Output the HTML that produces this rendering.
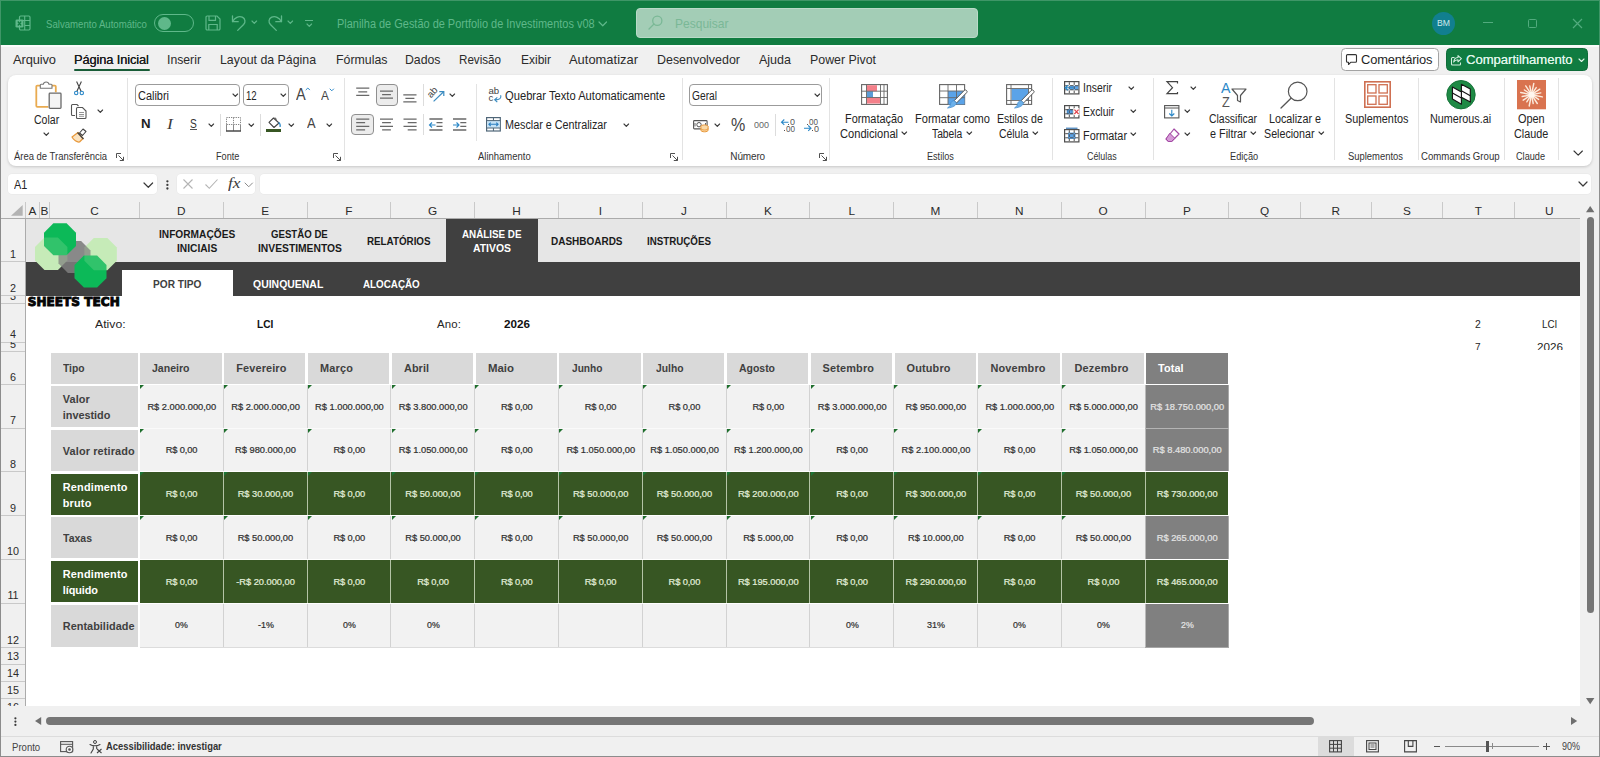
<!DOCTYPE html>
<html lang="pt-BR">
<head>
<meta charset="utf-8">
<title>Planilha de Gestão de Portfolio de Investimentos v08 - Excel</title>
<style>
*{box-sizing:border-box;margin:0;padding:0}
html,body{width:1600px;height:757px;overflow:hidden;background:#f0f0f0}
body{font-family:"Liberation Sans",Arial,sans-serif;color:#242424;position:relative}
.abs{position:absolute}
.t{position:absolute;white-space:nowrap;line-height:1}
svg{position:absolute;overflow:visible}
/* title bar */
#title{position:absolute;left:0;top:0;width:1600px;height:45px;background:#107c41;border-top:1px solid #3f9667;border-left:1px solid #3f9667;border-right:1px solid #3f9667}
/* ribbon */
#ribbon{position:absolute;left:8px;top:74.5px;width:1583.5px;height:91px;background:#fff;border-radius:8px;box-shadow:0 1px 3px rgba(0,0,0,.18)}
.tri{position:absolute;width:0;height:0;border-top:4.6px solid #1e6e2c;border-right:4.8px solid transparent}
</style>
</head>
<body>
<!-- g_title -->
<div id="title"></div>
<svg style="left:15.0px;top:15.0px" width="16" height="16" viewBox="0 0 16 16" ><rect x="4.500" y="1" width="10.500" height="14" rx="1.200" fill="none" stroke="#5fb88a" stroke-width="1.200"/><path d="M9.700 1v14M4.500 5.500h10.500M9.700 10.500h5.300" stroke="#5fb88a" stroke-width="1.100" fill="none"/><rect x="0.500" y="4.500" width="8" height="8" rx="1.300" fill="#5fb88a"/><path d="M2.800 6.500l3.400 4M6.200 6.500l-3.400 4" stroke="#107c41" stroke-width="1.200"/></svg>
<div class="t" style="left:46.0px;top:18.5px;font-size:10.6px;color:#5fb88a;transform:scaleX(0.907);transform-origin:0 0;">Salvamento Automático</div>
<div class="abs" style="left:154.0px;top:13.5px;width:40.0px;height:18.5px;border:1.2px solid #5fb88a;border-radius:10px"></div>
<div class="abs" style="left:157.5px;top:16.5px;width:13.0px;height:13.0px;border-radius:50%;background:#5fb88a"></div>
<svg style="left:205.0px;top:15.0px" width="16" height="16" viewBox="0 0 16 16" fill="none" stroke="#5fb88a" stroke-width="1.200"><path d="M1 2.200a1.200 1.200 0 0 1 1.200-1.200h9.800l3 3v9.800a1.200 1.200 0 0 1-1.200 1.200h-11.600a1.200 1.200 0 0 1-1.200-1.200z"/><path d="M4 1v4.300h6.500v-4.300M3.800 15v-5.500h8.400v5.500"/></svg>
<svg style="left:231.0px;top:15.0px" width="16" height="16" viewBox="0 0 16 16" fill="none" stroke="#5fb88a" stroke-width="1.300" stroke-linecap="round" stroke-linejoin="round"><path d="M1.500 1v5.700h5.700"/><path d="M1.700 6.500C3.600 2.700 7.800 0.700 11.300 2.200c3.200 1.500 3.400 5 1.300 7.300L6.700 15.400"/></svg>
<svg style="left:252.2px;top:21.4px" width="4.6" height="2.3" viewBox="0 0 4.6 2.3"><path d="M0 0L2.3 2.3L4.6 0" fill="none" stroke="#5fb88a" stroke-width="1.15" stroke-linecap="round" stroke-linejoin="round"/></svg>
<svg style="left:266.5px;top:15.0px" width="16" height="16" viewBox="0 0 16 16" fill="none" stroke="#5fb88a" stroke-width="1.300" stroke-linecap="round" stroke-linejoin="round"><path d="M14.500 1v5.700h-5.700"/><path d="M14.300 6.500C12.400 2.700 8.200 0.700 4.700 2.200c-3.200 1.500-3.400 5-1.300 7.300L9.300 15.400"/></svg>
<svg style="left:288.2px;top:21.4px" width="4.6" height="2.3" viewBox="0 0 4.6 2.3"><path d="M0 0L2.3 2.3L4.6 0" fill="none" stroke="#5fb88a" stroke-width="1.15" stroke-linecap="round" stroke-linejoin="round"/></svg>
<div class="abs" style="left:305.0px;top:20.2px;width:8.0px;height:1.2px;background:#5fb88a"></div>
<svg style="left:306.7px;top:23.5px" width="4.6" height="2.3" viewBox="0 0 4.6 2.3"><path d="M0 0L2.3 2.3L4.6 0" fill="none" stroke="#5fb88a" stroke-width="1.15" stroke-linecap="round" stroke-linejoin="round"/></svg>
<div class="t" style="left:336.5px;top:18.0px;font-size:12.3px;color:#5fb88a;transform:scaleX(0.891);transform-origin:0 0;">Planilha de Gestão de Portfolio de Investimentos v08</div>
<svg style="left:599.2px;top:21.6px" width="7.5" height="3.75" viewBox="0 0 7.5 3.75"><path d="M0 0L3.75 3.75L7.5 0" fill="none" stroke="#5fb88a" stroke-width="1.2" stroke-linecap="round" stroke-linejoin="round"/></svg>
<div class="abs" style="left:636.0px;top:8.0px;width:342.0px;height:30.0px;background:#a3cdb6;border:1px solid #b9dac8;border-radius:4px"></div>
<svg style="left:648.0px;top:15.0px" width="15" height="15" viewBox="0 0 15 15" fill="none" stroke="#7ab896" stroke-width="1.300" stroke-linecap="round"><circle cx="9.300" cy="5.700" r="4.600"/><path d="M6 9L1 14"/></svg>
<div class="t" style="left:674.5px;top:16.6px;font-size:13.4px;color:#7ab896;transform:scaleX(0.898);transform-origin:0 0;">Pesquisar</div>
<div class="abs" style="left:1431.5px;top:11.5px;width:23.0px;height:23.0px;border-radius:50%;background:#117f8f"></div>
<div class="t" style="left:1436.5px;top:19.3px;font-size:8.4px;color:#cfe9ec;transform:scaleX(1.035);transform-origin:0 0;">BM</div>
<div class="abs" style="left:1483.0px;top:21.5px;width:10.0px;height:1.2px;background:#52ab7e"></div>
<div class="abs" style="left:1528.0px;top:18.5px;width:9.0px;height:9.0px;border:1.200px solid #52ab7e;border-radius:1.500px"></div>
<svg style="left:1572.5px;top:18.5px" width="9" height="9" viewBox="0 0 9 9" stroke="#52ab7e" stroke-width="1.200" fill="none"><path d="M0 0l9 9M9 0l-9 9"/></svg>
<div class="t" style="left:13.0px;top:54.0px;font-size:12.9px;letter-spacing:-0.12px;color:#2b2b2b;">Arquivo</div>
<div class="t" style="left:74.0px;top:54.0px;font-size:12.9px;letter-spacing:-0.13px;color:#1c1c1c;text-shadow:0 0 .35px #1c1c1c;">Página Inicial</div>
<div class="t" style="left:166.5px;top:54.0px;font-size:12.9px;color:#2b2b2b;transform:scaleX(0.949);transform-origin:0 0;">Inserir</div>
<div class="t" style="left:220.0px;top:54.0px;font-size:12.9px;color:#2b2b2b;transform:scaleX(0.957);transform-origin:0 0;">Layout da Página</div>
<div class="t" style="left:336.0px;top:54.0px;font-size:12.9px;color:#2b2b2b;transform:scaleX(0.958);transform-origin:0 0;">Fórmulas</div>
<div class="t" style="left:405.0px;top:54.0px;font-size:12.9px;color:#2b2b2b;transform:scaleX(0.953);transform-origin:0 0;">Dados</div>
<div class="t" style="left:459.0px;top:54.0px;font-size:12.9px;color:#2b2b2b;transform:scaleX(0.902);transform-origin:0 0;">Revisão</div>
<div class="t" style="left:520.7px;top:54.0px;font-size:12.9px;color:#2b2b2b;transform:scaleX(0.931);transform-origin:0 0;">Exibir</div>
<div class="t" style="left:569.0px;top:54.0px;font-size:12.9px;letter-spacing:0.02px;color:#2b2b2b;">Automatizar</div>
<div class="t" style="left:657.0px;top:54.0px;font-size:12.9px;color:#2b2b2b;transform:scaleX(0.965);transform-origin:0 0;">Desenvolvedor</div>
<div class="t" style="left:759.0px;top:54.0px;font-size:12.9px;color:#2b2b2b;transform:scaleX(0.970);transform-origin:0 0;">Ajuda</div>
<div class="t" style="left:810.0px;top:54.0px;font-size:12.9px;color:#2b2b2b;transform:scaleX(0.960);transform-origin:0 0;">Power Pivot</div>
<div class="abs" style="left:74.0px;top:68.6px;width:75.5px;height:2.3px;background:#185c37;border-radius:1.500px"></div>
<div class="abs" style="left:1341.0px;top:48.0px;width:97.7px;height:22.7px;background:#fff;border:1px solid #a3a3a3;border-radius:4.500px"></div>
<svg style="left:1346.0px;top:54.0px" width="11" height="11" viewBox="0 0 11 11" fill="none" stroke="#333" stroke-width="1.100" stroke-linejoin="round"><path d="M1.500 0.600h8a1 1 0 0 1 1 1v5.600a1 1 0 0 1-1 1h-4.500l-2.500 2.300v-2.300h-1a1 1 0 0 1-1-1v-5.600a1 1 0 0 1 1-1z"/></svg>
<div class="t" style="left:1361.0px;top:53.5px;font-size:12.9px;letter-spacing:-0.16px;color:#1f1f1f;">Comentários</div>
<div class="abs" style="left:1446.3px;top:48.0px;width:141.9px;height:22.7px;background:#107c41;border-radius:4.500px;border:1px solid #0e6c39"></div>
<svg style="left:1451.0px;top:54.5px" width="11" height="10.5" viewBox="0 0 11 10.5" fill="none" stroke="#d5f0e1" stroke-width="1.050" stroke-linejoin="round"><path d="M3.500 2.500h-2a1 1 0 0 0-1 1v5.500a1 1 0 0 0 1 1h7a1 1 0 0 0 1-1v-1.500"/><path d="M7 0.600l3.400 3.100-3.400 3.100v-2c-2.400 0-3.600.9-4.300 2.300.2-2.800 1.600-4.500 4.300-4.600z"/></svg>
<div class="t" style="left:1466.0px;top:53.2px;font-size:13.1px;letter-spacing:-0.03px;color:#dff5e9;text-shadow:0 0 .3px #dff5e9;">Compartilhamento</div>
<svg style="left:1579.3px;top:58.5px" width="5" height="2.5" viewBox="0 0 5 2.5"><path d="M0 0L2.5 2.5L5 0" fill="none" stroke="#dff5e9" stroke-width="1.1" stroke-linecap="round" stroke-linejoin="round"/></svg>
<!-- g_rib1 -->
<div id="ribbon"></div>
<svg style="left:35.0px;top:80.0px" width="28" height="30" viewBox="0 0 28 30" ><path d="M5.500 5.600h-3.200a1 1 0 0 0-1 1v19.200a1 1 0 0 0 1 1h11" fill="none" stroke="#e9ab50" stroke-width="1.800"/><path d="M16.800 5.600h3a1 1 0 0 1 1 1v5.600" fill="none" stroke="#e9ab50" stroke-width="1.800"/><path d="M5.300 8.300v-3.200a.8.800 0 0 1 .8-.8h2.200a2.900 2.900 0 0 1 5.700 0h2.200a.8.800 0 0 1 .8.800v3.200z" fill="#fff" stroke="#757575" stroke-width="1.100" stroke-linejoin="round"/><rect x="14.200" y="13.100" width="11.800" height="15.200" rx="0.800" fill="#f4f4f4" stroke="#6a6a6a" stroke-width="1.300"/></svg>
<div class="t" style="left:33.5px;top:113.7px;font-size:12px;color:#242424;transform:scaleX(0.878);transform-origin:0 0;">Colar</div>
<svg style="left:43.9px;top:133.0px" width="4.6" height="2.3" viewBox="0 0 4.6 2.3"><path d="M0 0L2.3 2.3L4.6 0" fill="none" stroke="#3a3a3a" stroke-width="1.15" stroke-linecap="round" stroke-linejoin="round"/></svg>
<svg style="left:73.5px;top:80.5px" width="10" height="15" viewBox="0 0 10 15" ><path d="M2.600 0.500l4.600 10M7.400 0.500l-4.600 10" stroke="#444" stroke-width="1.100" fill="none"/><circle cx="2.200" cy="12" r="1.700" fill="none" stroke="#2b88c8" stroke-width="1.100"/><circle cx="7.800" cy="12" r="1.700" fill="none" stroke="#2b88c8" stroke-width="1.100"/></svg>
<svg style="left:70.5px;top:104.0px" width="16" height="15" viewBox="0 0 16 15" ><path d="M4 11.500h-2.500a1 1 0 0 1-1-1v-9a1 1 0 0 1 1-1h4.500l1.500 1.500" fill="none" stroke="#555" stroke-width="1.100"/><path d="M6.500 3.500h5l3.500 3.500v6.500a1 1 0 0 1-1 1h-7.500a1 1 0 0 1-1-1v-9a1 1 0 0 1 1-1z" fill="#fff" stroke="#555" stroke-width="1.100"/><path d="M8 8.500h5M8 10.500h5M8 12.300h5" stroke="#777" stroke-width=".8"/></svg>
<svg style="left:98.0px;top:110.2px" width="4.6" height="2.3" viewBox="0 0 4.6 2.3"><path d="M0 0L2.3 2.3L4.6 0" fill="none" stroke="#3a3a3a" stroke-width="1.15" stroke-linecap="round" stroke-linejoin="round"/></svg>
<svg style="left:70.5px;top:127.5px" width="16" height="15" viewBox="0 0 16 15" ><path d="M1 9l6-4.500 5 6-3.500 3.500c-2.500.5-6-2-7.500-5z" fill="#fbe3c0" stroke="#e8983a" stroke-width="1.200" stroke-linejoin="round"/><path d="M8.500 5l3.500-4 3 2.500-3.500 4z" fill="#fff" stroke="#444" stroke-width="1.100" stroke-linejoin="round"/><path d="M6.500 4.500l6 6.500" stroke="#444" stroke-width="1.300"/></svg>
<div class="t" style="left:14.4px;top:152.3px;font-size:10.0px;color:#333;transform:scaleX(0.946);transform-origin:0 0;">Área de Transferência</div>
<svg style="left:115.8px;top:152.8px" width="8" height="8" viewBox="0 0 8 8" fill="none" stroke="#505050" stroke-width="1"><path d="M0.500 5v-4.500h4.500"/><path d="M2.500 2.500l5 5M7.500 3.800v3.700h-3.700"/></svg>
<div class="abs" style="left:127.0px;top:78.0px;width:1.0px;height:82.0px;background:#e3e3e3"></div>
<div class="abs" style="left:135.2px;top:84.3px;width:105.3px;height:21.7px;border:1px solid #9b9b9b;border-radius:4px;background:#fff"></div>
<div class="t" style="left:137.6px;top:89.8px;font-size:12px;color:#242424;transform:scaleX(0.911);transform-origin:0 0;">Calibri</div>
<svg style="left:233.3px;top:94.3px" width="4.6" height="2.3" viewBox="0 0 4.6 2.3"><path d="M0 0L2.3 2.3L4.6 0" fill="none" stroke="#3a3a3a" stroke-width="1.15" stroke-linecap="round" stroke-linejoin="round"/></svg>
<div class="abs" style="left:242.8px;top:84.3px;width:46.3px;height:21.7px;border:1px solid #9b9b9b;border-radius:4px;background:#fff"></div>
<div class="t" style="left:245.7px;top:89.8px;font-size:12px;color:#242424;transform:scaleX(0.801);transform-origin:0 0;">12</div>
<svg style="left:281.1px;top:94.3px" width="4.6" height="2.3" viewBox="0 0 4.6 2.3"><path d="M0 0L2.3 2.3L4.6 0" fill="none" stroke="#3a3a3a" stroke-width="1.15" stroke-linecap="round" stroke-linejoin="round"/></svg>
<div class="t" style="left:295.7px;top:86.5px;font-size:15.8px;color:#444;transform:scaleX(0.920);transform-origin:0 0;">A</div>
<svg style="left:305.8px;top:88.4px" width="3.6" height="1.8" viewBox="0 0 3.6 1.8"><path d="M0 1.8L1.8 0L3.6 1.8" fill="none" stroke="#2b88c8" stroke-width="1" stroke-linecap="round" stroke-linejoin="round"/></svg>
<div class="t" style="left:320.9px;top:89.7px;font-size:12px;color:#444;transform:scaleX(0.986);transform-origin:0 0;">A</div>
<svg style="left:329.5px;top:89.3px" width="3.6" height="1.8" viewBox="0 0 3.6 1.8"><path d="M0 0L1.8 1.8L3.6 0" fill="none" stroke="#2b88c8" stroke-width="1" stroke-linecap="round" stroke-linejoin="round"/></svg>
<div class="t" style="left:141.0px;top:118.1px;font-size:12.6px;font-weight:700;color:#222;transform:scaleX(1.054);transform-origin:0 0;">N</div>
<div class="t" style="left:166.9px;top:116.2px;font-size:15.2px;font-style:italic;color:#3a3a3a;font-family:'Liberation Serif',serif;transform:scaleX(1.146);transform-origin:0 0;">I</div>
<div class="t" style="left:190.1px;top:118.0px;font-size:12.2px;color:#333;transform:scaleX(0.835);transform-origin:0 0;">S</div>
<div class="abs" style="left:190.0px;top:129.2px;width:7.2px;height:1.2px;background:#555"></div>
<svg style="left:208.6px;top:124.0px" width="4.6" height="2.3" viewBox="0 0 4.6 2.3"><path d="M0 0L2.3 2.3L4.6 0" fill="none" stroke="#3a3a3a" stroke-width="1.15" stroke-linecap="round" stroke-linejoin="round"/></svg>
<div class="abs" style="left:220.4px;top:114.0px;width:1.0px;height:22.0px;background:#dcdcdc"></div>
<svg style="left:225.5px;top:117.0px" width="15" height="15" viewBox="0 0 15 15" ><path d="M0.500 7.500v-7h14v7M7.500 0.500v7M0.500 7.500h14" fill="none" stroke="#858585" stroke-width="1" stroke-dasharray="1.300 1"/><path d="M0.500 7.500v6.500M14.500 7.500v6.500M7.500 7.500v6.500" fill="none" stroke="#8a8a8a" stroke-width="1"/><path d="M0 14h15" fill="none" stroke="#4a4a4a" stroke-width="1.500"/></svg>
<svg style="left:248.7px;top:124.0px" width="4.6" height="2.3" viewBox="0 0 4.6 2.3"><path d="M0 0L2.3 2.3L4.6 0" fill="none" stroke="#3a3a3a" stroke-width="1.15" stroke-linecap="round" stroke-linejoin="round"/></svg>
<div class="abs" style="left:260.4px;top:114.0px;width:1.0px;height:22.0px;background:#dcdcdc"></div>
<svg style="left:267.0px;top:116.5px" width="15" height="12" viewBox="0 0 15 12" ><path d="M6.500 1l5.500 5-5 4.500-5-5.200z" fill="#fff" stroke="#444" stroke-width="1.100" stroke-linejoin="round"/><path d="M8 0.500l1.500 2" stroke="#444" stroke-width="1"/><path d="M11.500 5.500c1.500.8 2 2.500 1.600 4.500" fill="none" stroke="#2b88c8" stroke-width="1.200"/></svg>
<div class="abs" style="left:266.2px;top:128.6px;width:14.8px;height:3.2px;background:#375623"></div>
<svg style="left:288.7px;top:124.0px" width="4.6" height="2.3" viewBox="0 0 4.6 2.3"><path d="M0 0L2.3 2.3L4.6 0" fill="none" stroke="#3a3a3a" stroke-width="1.15" stroke-linecap="round" stroke-linejoin="round"/></svg>
<div class="t" style="left:307.4px;top:115.7px;font-size:14.4px;color:#444;transform:scaleX(0.895);transform-origin:0 0;">A</div>
<svg style="left:326.7px;top:124.0px" width="4.6" height="2.3" viewBox="0 0 4.6 2.3"><path d="M0 0L2.3 2.3L4.6 0" fill="none" stroke="#3a3a3a" stroke-width="1.15" stroke-linecap="round" stroke-linejoin="round"/></svg>
<div class="t" style="left:216.0px;top:152.3px;font-size:10.0px;color:#333;transform:scaleX(0.915);transform-origin:0 0;">Fonte</div>
<svg style="left:333.0px;top:153.0px" width="8" height="8" viewBox="0 0 8 8" fill="none" stroke="#505050" stroke-width="1"><path d="M0.500 5v-4.500h4.500"/><path d="M2.500 2.500l5 5M7.500 3.800v3.700h-3.700"/></svg>
<div class="abs" style="left:343.6px;top:78.0px;width:1.0px;height:82.0px;background:#e3e3e3"></div>
<svg style="left:0;top:0" width="10" height="10" viewBox="0 0 10 10"><path d="M356.2 88.20H369.3M358.3 91.80H367.2M356.2 95.30H369.3" fill="none" stroke="#686868" stroke-width="1.3"/></svg>
<div class="abs" style="left:375.5px;top:84.3px;width:22.0px;height:21.7px;border:1px solid #8f8f8f;border-radius:4px;background:#ececec"></div>
<svg style="left:0;top:0" width="10" height="10" viewBox="0 0 10 10"><path d="M380.0 91.20H393.0M382.1 94.70H390.9M380.0 98.20H393.0" fill="none" stroke="#686868" stroke-width="1.3"/></svg>
<svg style="left:0;top:0" width="10" height="10" viewBox="0 0 10 10"><path d="M403.3 94.90H416.5M405.4 98.40H414.4M403.3 101.90H416.5" fill="none" stroke="#686868" stroke-width="1.3"/></svg>
<div class="abs" style="left:423.2px;top:84.0px;width:1.0px;height:21.6px;background:#dcdcdc"></div>
<svg style="left:427.0px;top:86.0px" width="18" height="17" viewBox="0 0 18 17" ><path d="M6.600 15.400l10-9.600" stroke="#3a8bc0" stroke-width="1.200" fill="none"/><path d="M12.300 5.600h4.500v4.500" stroke="#3a8bc0" stroke-width="1.200" fill="none"/><text x="0" y="0" font-family="Liberation Sans,sans-serif" font-size="9.800" fill="#444" transform="translate(3.900 12.600) rotate(-47)">ab</text></svg>
<svg style="left:449.5px;top:94.3px" width="4.6" height="2.3" viewBox="0 0 4.6 2.3"><path d="M0 0L2.3 2.3L4.6 0" fill="none" stroke="#3a3a3a" stroke-width="1.15" stroke-linecap="round" stroke-linejoin="round"/></svg>
<div class="abs" style="left:476.4px;top:83.6px;width:1.0px;height:57.1px;background:#e3e3e3"></div>
<svg style="left:487.5px;top:86.0px" width="15" height="17" viewBox="0 0 15 17" ><text x="0.500" y="8" font-family="Liberation Sans,sans-serif" font-size="9.600" fill="#444">ab</text><text x="0.500" y="15.300" font-family="Liberation Sans,sans-serif" font-size="9.600" fill="#444">c</text><path d="M12.600 9.300c1.200 2.800-1 4.600-5.600 4.500M9.300 11.300l-2.600 2.500 2.600 2.300" fill="none" stroke="#3a8bc0" stroke-width="1.150"/></svg>
<div class="t" style="left:505.0px;top:89.7px;font-size:12px;color:#242424;transform:scaleX(0.932);transform-origin:0 0;">Quebrar Texto Automaticamente</div>
<div class="abs" style="left:351.4px;top:113.9px;width:22.3px;height:21.6px;border:1px solid #8f8f8f;border-radius:4px;background:#ececec"></div>
<svg style="left:0;top:0" width="10" height="10" viewBox="0 0 10 10"><path d="M356.2 119.10H369.3M356.2 122.70H365.1M356.2 126.30H369.3M356.2 129.90H365.1" fill="none" stroke="#686868" stroke-width="1.3"/></svg>
<svg style="left:0;top:0" width="10" height="10" viewBox="0 0 10 10"><path d="M380.0 119.10H393.0M382.1 122.70H390.9M380.0 126.30H393.0M382.1 129.90H390.9" fill="none" stroke="#686868" stroke-width="1.3"/></svg>
<svg style="left:0;top:0" width="10" height="10" viewBox="0 0 10 10"><path d="M403.5 119.10H416.6M407.7 122.70H416.6M403.5 126.30H416.6M407.7 129.90H416.6" fill="none" stroke="#686868" stroke-width="1.3"/></svg>
<div class="abs" style="left:423.2px;top:113.9px;width:1.0px;height:21.6px;background:#dcdcdc"></div>
<svg style="left:0;top:0" width="10" height="10" viewBox="0 0 10 10"><path d="M429.4 119.00H442.5M429.4 130.00H442.5" fill="none" stroke="#686868" stroke-width="1.3"/></svg>
<svg style="left:0;top:0" width="10" height="10" viewBox="0 0 10 10"><path d="M436.5 122.70H442.5M436.5 126.30H442.5" fill="none" stroke="#686868" stroke-width="1.3"/></svg>
<svg style="left:429.0px;top:121.5px" width="7" height="6" viewBox="0 0 7 6" ><path d="M6.500 3h-6M3 0.500l-2.500 2.500 2.500 2.500" fill="none" stroke="#2b88c8" stroke-width="1.100"/></svg>
<svg style="left:0;top:0" width="10" height="10" viewBox="0 0 10 10"><path d="M453.0 119.00H466.3M453.0 130.00H466.3" fill="none" stroke="#686868" stroke-width="1.3"/></svg>
<svg style="left:0;top:0" width="10" height="10" viewBox="0 0 10 10"><path d="M460.3 122.70H466.3M460.3 126.30H466.3" fill="none" stroke="#686868" stroke-width="1.3"/></svg>
<svg style="left:453.0px;top:121.5px" width="7" height="6" viewBox="0 0 7 6" ><path d="M0 3h6M3.500 0.500l2.500 2.500-2.500 2.500" fill="none" stroke="#2b88c8" stroke-width="1.100"/></svg>
<svg style="left:485.5px;top:117.0px" width="15" height="15" viewBox="0 0 15 15" ><rect x="0.600" y="0.600" width="13.700" height="13.400" fill="#fff" stroke="#4f6678" stroke-width="1.200"/><rect x="1.200" y="3.700" width="12.500" height="7.200" fill="#c4e2f6"/><path d="M0.600 3.600h13.700M0.600 11h13.700M7.450 0.600v3M7.450 11v3" stroke="#4f6678" stroke-width="1"/><path d="M3 7.300h9M4.700 5.600l-1.800 1.700 1.800 1.700M10.300 5.600l1.800 1.700-1.800 1.700" fill="none" stroke="#2b7fc0" stroke-width="1.050"/></svg>
<div class="t" style="left:504.6px;top:119.3px;font-size:12px;color:#242424;transform:scaleX(0.899);transform-origin:0 0;">Mesclar e Centralizar</div>
<svg style="left:624.0px;top:124.0px" width="4.6" height="2.3" viewBox="0 0 4.6 2.3"><path d="M0 0L2.3 2.3L4.6 0" fill="none" stroke="#3a3a3a" stroke-width="1.15" stroke-linecap="round" stroke-linejoin="round"/></svg>
<div class="t" style="left:478.2px;top:152.3px;font-size:10.0px;color:#333;transform:scaleX(0.948);transform-origin:0 0;">Alinhamento</div>
<svg style="left:670.2px;top:153.0px" width="8" height="8" viewBox="0 0 8 8" fill="none" stroke="#505050" stroke-width="1"><path d="M0.500 5v-4.500h4.500"/><path d="M2.500 2.500l5 5M7.500 3.800v3.700h-3.700"/></svg>
<div class="abs" style="left:681.7px;top:78.0px;width:1.0px;height:82.0px;background:#e3e3e3"></div>
<!-- g_rib2 -->
<div class="abs" style="left:689.3px;top:84.3px;width:133.0px;height:21.7px;border:1px solid #9b9b9b;border-radius:4px;background:#fff"></div>
<div class="t" style="left:691.8px;top:89.7px;font-size:12px;color:#242424;transform:scaleX(0.852);transform-origin:0 0;">Geral</div>
<svg style="left:814.7px;top:94.3px" width="4.6" height="2.3" viewBox="0 0 4.6 2.3"><path d="M0 0L2.3 2.3L4.6 0" fill="none" stroke="#3a3a3a" stroke-width="1.15" stroke-linecap="round" stroke-linejoin="round"/></svg>
<svg style="left:692.5px;top:120.0px" width="16" height="12.5" viewBox="0 0 16 12.5" ><rect x="0.600" y="0.600" width="13.500" height="8.300" rx="0.800" fill="#fff" stroke="#555" stroke-width="1.100"/><circle cx="6" cy="4.700" r="2.200" fill="none" stroke="#555" stroke-width="1"/><path d="M2 3v3.400M12.500 3v2" stroke="#555" stroke-width=".9"/><ellipse cx="11.500" cy="6.500" rx="3.600" ry="1.600" fill="#fbd9a6" stroke="#e8983a" stroke-width="1"/><path d="M7.900 6.500v3.700c0 .9 1.600 1.600 3.600 1.600s3.600-.7 3.600-1.600v-3.700" fill="#fbd9a6" stroke="#e8983a" stroke-width="1"/><path d="M7.900 8.500c0 .9 1.600 1.500 3.600 1.500s3.600-.6 3.600-1.500" fill="none" stroke="#e8983a" stroke-width=".9"/></svg>
<svg style="left:715.2px;top:124.0px" width="4.6" height="2.3" viewBox="0 0 4.6 2.3"><path d="M0 0L2.3 2.3L4.6 0" fill="none" stroke="#3a3a3a" stroke-width="1.15" stroke-linecap="round" stroke-linejoin="round"/></svg>
<div class="t" style="left:731.0px;top:116.0px;font-size:18.2px;color:#444;transform:scaleX(0.884);transform-origin:0 0;">%</div>
<div class="t" style="left:754.0px;top:119.9px;font-size:9.4px;color:#666;transform:scaleX(0.958);transform-origin:0 0;">000</div>
<div class="abs" style="left:774.6px;top:114.0px;width:1.0px;height:21.5px;background:#dcdcdc"></div>
<div class="t" style="left:790.0px;top:118.0px;font-size:8.4px;color:#555;transform:scaleX(1.070);transform-origin:0 0;">0</div>
<div class="abs" style="left:788.0px;top:123.6px;width:1.0px;height:1.0px;background:#555"></div>
<div class="t" style="left:786.0px;top:124.6px;font-size:8.4px;color:#555;transform:scaleX(0.965);transform-origin:0 0;">00</div>
<div class="abs" style="left:783.8px;top:130.2px;width:1.0px;height:1.0px;background:#555"></div>
<svg style="left:780.7px;top:118.5px" width="8" height="6.5" viewBox="0 0 8 6.5" ><path d="M7.500 3.200h-7M3.300 0.500l-2.800 2.700 2.800 2.700" fill="none" stroke="#2b88c8" stroke-width="1.100"/></svg>
<div class="t" style="left:809.0px;top:118.0px;font-size:8.4px;color:#555;transform:scaleX(0.965);transform-origin:0 0;">00</div>
<div class="abs" style="left:806.8px;top:123.6px;width:1.0px;height:1.0px;background:#555"></div>
<div class="t" style="left:813.5px;top:124.6px;font-size:8.4px;color:#555;transform:scaleX(1.070);transform-origin:0 0;">0</div>
<div class="abs" style="left:811.5px;top:130.2px;width:1.0px;height:1.0px;background:#555"></div>
<svg style="left:804.0px;top:125.0px" width="8" height="6.5" viewBox="0 0 8 6.5" ><path d="M0 3.200h7M4.200 0.500l2.800 2.700-2.800 2.700" fill="none" stroke="#2b88c8" stroke-width="1.100"/></svg>
<div class="t" style="left:730.3px;top:152.3px;font-size:10.0px;letter-spacing:-0.14px;color:#333;">Número</div>
<svg style="left:818.8px;top:153.0px" width="8" height="8" viewBox="0 0 8 8" fill="none" stroke="#505050" stroke-width="1"><path d="M0.500 5v-4.500h4.500"/><path d="M2.500 2.500l5 5M7.500 3.800v3.700h-3.700"/></svg>
<div class="abs" style="left:829.4px;top:78.0px;width:1.0px;height:82.0px;background:#e3e3e3"></div>
<svg style="left:860.5px;top:84.0px" width="27" height="21" viewBox="0 0 27 21" ><rect x="0.600" y="0.600" width="25.800" height="19.800" fill="#fff" stroke="#666" stroke-width="1.100"/><rect x="5.500" y="1.200" width="10.500" height="6" fill="#f4808a"/><rect x="5.500" y="7.200" width="6.500" height="6.300" fill="#5b9bd5"/><rect x="5.500" y="13.500" width="13.500" height="6" fill="#f4808a"/><path d="M5.500 0.600v19.800M0.600 7.200h25.800M0.600 13.500h25.800M19.500 0.600v19.800M23 0.600v19.800" stroke="#666" stroke-width=".9" fill="none"/></svg>
<div class="t" style="left:845.0px;top:112.7px;font-size:12px;color:#242424;transform:scaleX(0.906);transform-origin:0 0;">Formatação</div>
<div class="t" style="left:839.9px;top:127.6px;font-size:12px;color:#242424;transform:scaleX(0.926);transform-origin:0 0;">Condicional</div>
<svg style="left:902.2px;top:131.5px" width="4.6" height="2.3" viewBox="0 0 4.6 2.3"><path d="M0 0L2.3 2.3L4.6 0" fill="none" stroke="#3a3a3a" stroke-width="1.15" stroke-linecap="round" stroke-linejoin="round"/></svg>
<svg style="left:939.0px;top:84.0px" width="29" height="25" viewBox="0 0 29 25" ><rect x="0.600" y="0.600" width="25" height="19.800" fill="#fff" stroke="#666" stroke-width="1.100"/><rect x="9" y="7" width="16.600" height="13.400" fill="#5ba3e8"/><path d="M9 0.600v19.800M17.500 0.600v19.800M0.600 7h25M0.600 13.700h25" stroke="#666" stroke-width=".9" fill="none"/><path d="M27.500 6.500c.8.600.8 1.500 0 2.300l-10 10.200-2.300-2.300 10-10.200c.8-.8 1.600-.7 2.300 0z" fill="#fff" stroke="#555" stroke-width="1"/><path d="M15.200 16.700l2.300 2.300c-.5 2.500-3.500 4.500-9 5 2.500-1.500 3-3.500 3.500-5.500 1-1.500 2.200-2 3.200-1.800z" fill="#6cb0ea" stroke="#4a90d0" stroke-width=".8"/></svg>
<div class="t" style="left:914.7px;top:112.7px;font-size:12px;color:#242424;transform:scaleX(0.921);transform-origin:0 0;">Formatar como</div>
<div class="t" style="left:931.6px;top:127.6px;font-size:12px;color:#242424;transform:scaleX(0.857);transform-origin:0 0;">Tabela</div>
<svg style="left:966.7px;top:131.5px" width="4.6" height="2.3" viewBox="0 0 4.6 2.3"><path d="M0 0L2.3 2.3L4.6 0" fill="none" stroke="#3a3a3a" stroke-width="1.15" stroke-linecap="round" stroke-linejoin="round"/></svg>
<svg style="left:1006.0px;top:84.0px" width="29" height="25" viewBox="0 0 29 25" ><rect x="0.600" y="0.600" width="25" height="19.800" fill="#fff" stroke="#666" stroke-width="1.100"/><rect x="5.500" y="5" width="17" height="11" fill="#5ba3e8"/><path d="M5 0.600v19.800M22.500 0.600v19.800M0.600 4.500h25M0.600 16.500h25" stroke="#666" stroke-width=".9" fill="none"/><path d="M27.500 6.500c.8.600.8 1.500 0 2.300l-10 10.200-2.300-2.300 10-10.200c.8-.8 1.600-.7 2.300 0z" fill="#fff" stroke="#555" stroke-width="1"/><path d="M15.200 16.700l2.300 2.300c-.5 2.500-3.500 4.500-9 5 2.500-1.500 3-3.500 3.500-5.500 1-1.500 2.200-2 3.200-1.800z" fill="#6cb0ea" stroke="#4a90d0" stroke-width=".8"/></svg>
<div class="t" style="left:996.8px;top:112.7px;font-size:12px;color:#242424;transform:scaleX(0.880);transform-origin:0 0;">Estilos de</div>
<div class="t" style="left:999.3px;top:127.6px;font-size:12px;color:#242424;transform:scaleX(0.867);transform-origin:0 0;">Célula</div>
<svg style="left:1033.4px;top:131.5px" width="4.6" height="2.3" viewBox="0 0 4.6 2.3"><path d="M0 0L2.3 2.3L4.6 0" fill="none" stroke="#3a3a3a" stroke-width="1.15" stroke-linecap="round" stroke-linejoin="round"/></svg>
<div class="t" style="left:926.8px;top:152.3px;font-size:10.0px;color:#333;transform:scaleX(0.910);transform-origin:0 0;">Estilos</div>
<div class="abs" style="left:1052.2px;top:78.0px;width:1.0px;height:82.0px;background:#e3e3e3"></div>
<svg style="left:1063.5px;top:81.3px" width="16" height="14" viewBox="0 0 16 14" ><rect x="0.600" y="0.600" width="14.300" height="12.300" fill="#fff" stroke="#4d4d4d" stroke-width="1.200"/><rect x="5.300" y="4.700" width="9" height="4.100" fill="#5ba3e8"/><path d="M5.300 1.200v11.200M10.200 1.200v11.200" stroke="#4d4d4d" stroke-width="1" stroke-dasharray="2.700 1.400" fill="none"/><path d="M1.200 4.700h13.200M1.200 8.800h13.200" stroke="#4d4d4d" stroke-width="1" stroke-dasharray="3.400 1.500" fill="none"/><path d="M9.500 6.750h-8M3.900 4.200l-2.700 2.550 2.700 2.550" fill="none" stroke="#2b88c8" stroke-width="1.200"/></svg>
<div class="t" style="left:1082.5px;top:82.2px;font-size:12px;color:#242424;transform:scaleX(0.867);transform-origin:0 0;">Inserir</div>
<svg style="left:1129.0px;top:86.8px" width="4.6" height="2.3" viewBox="0 0 4.6 2.3"><path d="M0 0L2.3 2.3L4.6 0" fill="none" stroke="#3a3a3a" stroke-width="1.15" stroke-linecap="round" stroke-linejoin="round"/></svg>
<svg style="left:1063.5px;top:105.0px" width="16" height="14" viewBox="0 0 16 14" ><rect x="0.600" y="0.600" width="14.300" height="12.300" fill="#fff" stroke="#4d4d4d" stroke-width="1.200"/><rect x="3.200" y="4.700" width="5" height="4.100" fill="#5ba3e8" stroke="#2b6fb0" stroke-width=".9"/><path d="M5.300 1.200v11.200M10.200 1.200v11.200" stroke="#4d4d4d" stroke-width="1" stroke-dasharray="2.700 1.400" fill="none"/><path d="M1.200 4.700h13.200M1.200 8.800h13.200" stroke="#4d4d4d" stroke-width="1" stroke-dasharray="3.400 1.500" fill="none"/><rect x="9.600" y="3.200" width="5.800" height="7" fill="#fff"/><path d="M10.400 4.600l4.200 4.400M14.600 4.600l-4.200 4.400" stroke="#e0434b" stroke-width="1.200"/></svg>
<div class="t" style="left:1082.5px;top:105.8px;font-size:12px;color:#242424;transform:scaleX(0.866);transform-origin:0 0;">Excluir</div>
<svg style="left:1131.1px;top:110.3px" width="4.6" height="2.3" viewBox="0 0 4.6 2.3"><path d="M0 0L2.3 2.3L4.6 0" fill="none" stroke="#3a3a3a" stroke-width="1.15" stroke-linecap="round" stroke-linejoin="round"/></svg>
<svg style="left:1063.5px;top:129.2px" width="16" height="14" viewBox="0 0 16 14" ><rect x="0.600" y="0.600" width="14.300" height="12.300" fill="#fff" stroke="#4d4d4d" stroke-width="1.200"/><rect x="4" y="3.600" width="7.500" height="6.400" fill="#5ba3e8"/><path d="M5.300 1.200v11.200M10.200 1.200v11.200" stroke="#4d4d4d" stroke-width="1" stroke-dasharray="2.700 1.400" fill="none"/><path d="M1.200 4.700h13.200M1.200 8.800h13.200" stroke="#4d4d4d" stroke-width="1" stroke-dasharray="3.400 1.500" fill="none"/><path d="M2 -0.800h11.500" stroke="#2b6fb0" stroke-width="1.100"/></svg>
<div class="t" style="left:1082.5px;top:129.6px;font-size:12px;color:#242424;transform:scaleX(0.904);transform-origin:0 0;">Formatar</div>
<svg style="left:1130.7px;top:133.4px" width="4.6" height="2.3" viewBox="0 0 4.6 2.3"><path d="M0 0L2.3 2.3L4.6 0" fill="none" stroke="#3a3a3a" stroke-width="1.15" stroke-linecap="round" stroke-linejoin="round"/></svg>
<div class="t" style="left:1087.3px;top:152.3px;font-size:10.0px;color:#333;transform:scaleX(0.887);transform-origin:0 0;">Células</div>
<div class="abs" style="left:1153.0px;top:78.0px;width:1.0px;height:82.0px;background:#e3e3e3"></div>
<!-- g_rib3 -->
<svg style="left:1166.0px;top:81.3px" width="12.5" height="13.5" viewBox="0 0 12.5 13.5" ><path d="M11.500 2.500v-1.800h-10.500l5.500 6-5.500 6h10.500v-1.800" fill="none" stroke="#444" stroke-width="1.200" stroke-linejoin="miter"/></svg>
<svg style="left:1191.3px;top:86.8px" width="4.6" height="2.3" viewBox="0 0 4.6 2.3"><path d="M0 0L2.3 2.3L4.6 0" fill="none" stroke="#3a3a3a" stroke-width="1.15" stroke-linecap="round" stroke-linejoin="round"/></svg>
<svg style="left:1164.0px;top:105.0px" width="16" height="13.5" viewBox="0 0 16 13.5" ><rect x="0.600" y="0.600" width="14.300" height="12.300" fill="#fff" stroke="#555" stroke-width="1.100"/><path d="M0.600 3h14.300" stroke="#555" stroke-width="1"/><path d="M7.800 4.800v6M5.300 8.500l2.500 2.500 2.500-2.500" fill="none" stroke="#2b88c8" stroke-width="1.100"/></svg>
<svg style="left:1185.4px;top:110.3px" width="4.6" height="2.3" viewBox="0 0 4.6 2.3"><path d="M0 0L2.3 2.3L4.6 0" fill="none" stroke="#3a3a3a" stroke-width="1.15" stroke-linecap="round" stroke-linejoin="round"/></svg>
<svg style="left:1164.5px;top:128.0px" width="15" height="14.5" viewBox="0 0 15 14.5" ><path d="M9 1l5 5-7.500 7.500h-3l-2.500-2.500z" fill="#fff" stroke="#a349a4" stroke-width="1.200" stroke-linejoin="round"/><path d="M4.800 5.300l5 5-3.300 3.200h-3l-2.500-2.500z" fill="#d59ad6" stroke="#a349a4" stroke-width="1" stroke-linejoin="round"/></svg>
<svg style="left:1185.4px;top:133.4px" width="4.6" height="2.3" viewBox="0 0 4.6 2.3"><path d="M0 0L2.3 2.3L4.6 0" fill="none" stroke="#3a3a3a" stroke-width="1.15" stroke-linecap="round" stroke-linejoin="round"/></svg>
<div class="t" style="left:1220.5px;top:81.3px;font-size:14.6px;color:#2b88c8;transform:scaleX(0.976);transform-origin:0 0;">A</div>
<div class="t" style="left:1221.5px;top:94.7px;font-size:14.2px;color:#555;transform:scaleX(0.899);transform-origin:0 0;">Z</div>
<svg style="left:1231.0px;top:87.5px" width="16" height="16" viewBox="0 0 16 16" ><path d="M1 1h14l-5.500 6.500v6.500l-3-1.500v-5z" fill="#fff" stroke="#555" stroke-width="1.200" stroke-linejoin="round"/></svg>
<div class="t" style="left:1209.3px;top:112.7px;font-size:12px;color:#242424;transform:scaleX(0.869);transform-origin:0 0;">Classificar</div>
<div class="t" style="left:1210.0px;top:127.6px;font-size:12px;color:#242424;transform:scaleX(0.902);transform-origin:0 0;">e Filtrar</div>
<svg style="left:1251.0px;top:131.5px" width="4.6" height="2.3" viewBox="0 0 4.6 2.3"><path d="M0 0L2.3 2.3L4.6 0" fill="none" stroke="#3a3a3a" stroke-width="1.15" stroke-linecap="round" stroke-linejoin="round"/></svg>
<svg style="left:1280.0px;top:80.5px" width="28" height="28" viewBox="0 0 28 28" ><circle cx="17.700" cy="10.400" r="9.300" fill="#fff" stroke="#555" stroke-width="1.200"/><path d="M11 17.200l-10 9.800" stroke="#555" stroke-width="1.300" stroke-linecap="round"/></svg>
<div class="t" style="left:1268.7px;top:112.7px;font-size:12px;color:#242424;transform:scaleX(0.896);transform-origin:0 0;">Localizar e</div>
<div class="t" style="left:1264.3px;top:127.6px;font-size:12px;color:#242424;transform:scaleX(0.891);transform-origin:0 0;">Selecionar</div>
<svg style="left:1319.1px;top:131.5px" width="4.6" height="2.3" viewBox="0 0 4.6 2.3"><path d="M0 0L2.3 2.3L4.6 0" fill="none" stroke="#3a3a3a" stroke-width="1.15" stroke-linecap="round" stroke-linejoin="round"/></svg>
<div class="t" style="left:1229.5px;top:152.3px;font-size:10.0px;color:#333;transform:scaleX(0.922);transform-origin:0 0;">Edição</div>
<div class="abs" style="left:1334.4px;top:78.0px;width:1.0px;height:82.0px;background:#e3e3e3"></div>
<svg style="left:1363.5px;top:81.0px" width="27" height="27" viewBox="0 0 27 27" ><rect x="0.800" y="0.800" width="25.400" height="25.400" fill="#fff" stroke="#cf7052" stroke-width="1.600"/><rect x="3.700" y="3.700" width="8.300" height="8.300" fill="#fff" stroke="#cf7052" stroke-width="1.300"/><rect x="15" y="3.700" width="8.300" height="8.300" fill="#fff" stroke="#cf7052" stroke-width="1.300"/><rect x="3.700" y="15" width="8.300" height="8.300" fill="#fff" stroke="#cf7052" stroke-width="1.300"/><rect x="15" y="15" width="8.300" height="8.300" fill="#fff" stroke="#cf7052" stroke-width="1.300"/></svg>
<div class="t" style="left:1345.0px;top:112.7px;font-size:12px;color:#242424;transform:scaleX(0.905);transform-origin:0 0;">Suplementos</div>
<div class="t" style="left:1348.2px;top:152.3px;font-size:10.0px;color:#333;transform:scaleX(0.942);transform-origin:0 0;">Suplementos</div>
<div class="abs" style="left:1417.7px;top:78.0px;width:1.0px;height:82.0px;background:#e3e3e3"></div>
<svg style="left:1445.5px;top:79.5px" width="30" height="30" viewBox="0 0 30 30" ><circle cx="15" cy="14.700" r="14.200" fill="#1f8a45" stroke="#17743a" stroke-width="1"/><path d="M6.450 7.100l8.950 4.900v12.200l-8.950-5.300z M15.400 4.300l8.900 4.800v13l-8.900-4.800z" fill="#fff" stroke="#161616" stroke-width="1.150" stroke-linejoin="round"/><path d="M6.450 13l8.950 5.100M15.400 10.800l8.900 5" stroke="#161616" stroke-width="1.150"/></svg>
<div class="t" style="left:1430.4px;top:113.0px;font-size:12px;color:#242424;transform:scaleX(0.898);transform-origin:0 0;">Numerous.ai</div>
<div class="t" style="left:1420.8px;top:152.3px;font-size:10.0px;color:#333;transform:scaleX(0.962);transform-origin:0 0;">Commands Group</div>
<div class="abs" style="left:1503.5px;top:78.0px;width:1.0px;height:82.0px;background:#e3e3e3"></div>
<svg style="left:1517.0px;top:79.5px" width="29" height="29.3" viewBox="0 0 29 29.3" ><rect width="29" height="29.300" fill="#d9734f"/><g stroke="#fcebdc" stroke-width="1.450" stroke-linecap="round"><path d="M14.500 14.700L25.3 16.9"/><path d="M14.500 14.700L21.6 19.4"/><path d="M14.500 14.700L20.3 23.5"/><path d="M14.500 14.700L16.2 23.5"/><path d="M14.500 14.700L12.2 26.0"/><path d="M14.500 14.700L9.8 21.8"/><path d="M14.500 14.700L6.2 20.2"/><path d="M14.500 14.700L5.2 16.5"/><path d="M14.500 14.700L3.7 12.5"/><path d="M14.500 14.700L7.4 10.0"/><path d="M14.500 14.700L8.7 5.9"/><path d="M14.500 14.700L12.8 5.9"/><path d="M14.500 14.700L16.8 3.4"/><path d="M14.500 14.700L19.2 7.6"/><path d="M14.500 14.700L22.8 9.2"/><path d="M14.500 14.700L23.8 12.9"/></g><circle cx="14.500" cy="14.700" r="3" fill="#fff6ee"/></svg>
<div class="t" style="left:1517.6px;top:113.0px;font-size:12px;color:#242424;transform:scaleX(0.909);transform-origin:0 0;">Open</div>
<div class="t" style="left:1513.8px;top:127.6px;font-size:12px;color:#242424;transform:scaleX(0.902);transform-origin:0 0;">Claude</div>
<div class="t" style="left:1515.8px;top:152.3px;font-size:10.0px;color:#333;transform:scaleX(0.915);transform-origin:0 0;">Claude</div>
<div class="abs" style="left:1557.5px;top:78.0px;width:1.0px;height:82.0px;background:#e3e3e3"></div>
<svg style="left:1574.0px;top:151.1px" width="8.4" height="4.2" viewBox="0 0 8.4 4.2"><path d="M0 0L4.2 4.2L8.4 0" fill="none" stroke="#333" stroke-width="1.1" stroke-linecap="round" stroke-linejoin="round"/></svg>
<!-- g_sheet -->
<div class="abs" style="left:8.4px;top:174.0px;width:148.8px;height:20.0px;background:#fff;border-radius:4px;box-shadow:0 0 0 .5px #e6e6e6"></div>
<div class="t" style="left:13.5px;top:178.7px;font-size:12px;color:#242424;transform:scaleX(0.906);transform-origin:0 0;">A1</div>
<svg style="left:143.7px;top:183.3px" width="8.6" height="4.3" viewBox="0 0 8.6 4.3"><path d="M0 0L4.3 4.3L8.6 0" fill="none" stroke="#3a3a3a" stroke-width="1.2" stroke-linecap="round" stroke-linejoin="round"/></svg>
<svg style="left:165.0px;top:178.0px" width="5" height="14" viewBox="0 0 5 14" fill="#3a3a3a"><circle cx="2.400" cy="3.300" r="1.150"/><circle cx="2.400" cy="6.900" r="1.150"/><circle cx="2.400" cy="10.500" r="1.150"/></svg>
<div class="abs" style="left:177.2px;top:174.0px;width:78.2px;height:20.0px;background:#fff;border-radius:4px;box-shadow:0 0 0 .5px #e6e6e6"></div>
<svg style="left:183.0px;top:179.0px" width="10" height="10" viewBox="0 0 10 10" fill="none" stroke="#b4b4b4" stroke-width="1.100"><path d="M0.500 0.500l9 9M9.500 0.500l-9 9"/></svg>
<svg style="left:204.5px;top:179.0px" width="13" height="10" viewBox="0 0 13 10" fill="none" stroke="#b4b4b4" stroke-width="1.100"><path d="M0.500 5.500l3.800 3.800L12.500 0.500"/></svg>
<div class="t" style="left:227.5px;top:176.2px;font-size:15px;font-style:italic;color:#3a3a3a;font-family:'Liberation Serif',serif;transform:scaleX(1.154);transform-origin:0 0;">fx</div>
<svg style="left:245.2px;top:183.1px" width="7.5" height="3.75" viewBox="0 0 7.5 3.75"><path d="M0 0L3.75 3.75L7.5 0" fill="none" stroke="#8a8a8a" stroke-width="1" stroke-linecap="round" stroke-linejoin="round"/></svg>
<div class="abs" style="left:260.0px;top:174.0px;width:1331.0px;height:20.0px;background:#fff;border-radius:4px;box-shadow:0 0 0 .5px #e6e6e6"></div>
<svg style="left:1579.0px;top:182.3px" width="8" height="4.0" viewBox="0 0 8 4.0"><path d="M0 0L4.0 4.0L8 0" fill="none" stroke="#3a3a3a" stroke-width="1.2" stroke-linecap="round" stroke-linejoin="round"/></svg>
<div class="abs" style="left:0.0px;top:200.6px;width:1580.0px;height:505.7px;background:#fff"></div>
<div class="abs" style="left:0.0px;top:200.6px;width:1580.0px;height:18.4px;background:#f0f0f0;border-bottom:1px solid #ababab"></div>
<svg style="left:11.3px;top:205.3px" width="11.7" height="10.7" viewBox="0 0 11.7 10.7" ><path d="M11.700 0v10.700h-11.700z" fill="#b3b3b3"/></svg>
<div class="t" style="left:28.6px;top:205.6px;font-size:11.8px;color:#2b2b2b">A</div>
<div class="abs" style="left:38.9px;top:201.5px;width:1.0px;height:16.5px;background:#c9c9c9"></div>
<div class="t" style="left:40.6px;top:205.6px;font-size:11.8px;color:#2b2b2b">B</div>
<div class="abs" style="left:49.2px;top:201.5px;width:1.0px;height:16.5px;background:#c9c9c9"></div>
<div class="t" style="left:90.3px;top:205.6px;font-size:11.8px;color:#2b2b2b">C</div>
<div class="abs" style="left:138.9px;top:201.5px;width:1.0px;height:16.5px;background:#c9c9c9"></div>
<div class="t" style="left:177.0px;top:205.6px;font-size:11.8px;color:#2b2b2b">D</div>
<div class="abs" style="left:222.7px;top:201.5px;width:1.0px;height:16.5px;background:#c9c9c9"></div>
<div class="t" style="left:261.2px;top:205.6px;font-size:11.8px;color:#2b2b2b">E</div>
<div class="abs" style="left:306.5px;top:201.5px;width:1.0px;height:16.5px;background:#c9c9c9"></div>
<div class="t" style="left:345.3px;top:205.6px;font-size:11.8px;color:#2b2b2b">F</div>
<div class="abs" style="left:390.3px;top:201.5px;width:1.0px;height:16.5px;background:#c9c9c9"></div>
<div class="t" style="left:428.1px;top:205.6px;font-size:11.8px;color:#2b2b2b">G</div>
<div class="abs" style="left:474.1px;top:201.5px;width:1.0px;height:16.5px;background:#c9c9c9"></div>
<div class="t" style="left:512.2px;top:205.6px;font-size:11.8px;color:#2b2b2b">H</div>
<div class="abs" style="left:557.9px;top:201.5px;width:1.0px;height:16.5px;background:#c9c9c9"></div>
<div class="t" style="left:598.7px;top:205.6px;font-size:11.8px;color:#2b2b2b">I</div>
<div class="abs" style="left:641.7px;top:201.5px;width:1.0px;height:16.5px;background:#c9c9c9"></div>
<div class="t" style="left:681.1px;top:205.6px;font-size:11.8px;color:#2b2b2b">J</div>
<div class="abs" style="left:725.5px;top:201.5px;width:1.0px;height:16.5px;background:#c9c9c9"></div>
<div class="t" style="left:764.0px;top:205.6px;font-size:11.8px;color:#2b2b2b">K</div>
<div class="abs" style="left:809.3px;top:201.5px;width:1.0px;height:16.5px;background:#c9c9c9"></div>
<div class="t" style="left:848.4px;top:205.6px;font-size:11.8px;color:#2b2b2b">L</div>
<div class="abs" style="left:893.1px;top:201.5px;width:1.0px;height:16.5px;background:#c9c9c9"></div>
<div class="t" style="left:930.6px;top:205.6px;font-size:11.8px;color:#2b2b2b">M</div>
<div class="abs" style="left:976.9px;top:201.5px;width:1.0px;height:16.5px;background:#c9c9c9"></div>
<div class="t" style="left:1015.0px;top:205.6px;font-size:11.8px;color:#2b2b2b">N</div>
<div class="abs" style="left:1060.7px;top:201.5px;width:1.0px;height:16.5px;background:#c9c9c9"></div>
<div class="t" style="left:1098.5px;top:205.6px;font-size:11.8px;color:#2b2b2b">O</div>
<div class="abs" style="left:1144.5px;top:201.5px;width:1.0px;height:16.5px;background:#c9c9c9"></div>
<div class="t" style="left:1183.0px;top:205.6px;font-size:11.8px;color:#2b2b2b">P</div>
<div class="abs" style="left:1228.3px;top:201.5px;width:1.0px;height:16.5px;background:#c9c9c9"></div>
<div class="t" style="left:1259.9px;top:205.6px;font-size:11.8px;color:#2b2b2b">Q</div>
<div class="abs" style="left:1299.6px;top:201.5px;width:1.0px;height:16.5px;background:#c9c9c9"></div>
<div class="t" style="left:1331.5px;top:205.6px;font-size:11.8px;color:#2b2b2b">R</div>
<div class="abs" style="left:1370.9px;top:201.5px;width:1.0px;height:16.5px;background:#c9c9c9"></div>
<div class="t" style="left:1403.1px;top:205.6px;font-size:11.8px;color:#2b2b2b">S</div>
<div class="abs" style="left:1442.2px;top:201.5px;width:1.0px;height:16.5px;background:#c9c9c9"></div>
<div class="t" style="left:1474.7px;top:205.6px;font-size:11.8px;color:#2b2b2b">T</div>
<div class="abs" style="left:1513.5px;top:201.5px;width:1.0px;height:16.5px;background:#c9c9c9"></div>
<div class="t" style="left:1545.1px;top:205.6px;font-size:11.8px;color:#2b2b2b">U</div>
<div class="abs" style="left:25.2px;top:201.5px;width:1.0px;height:16.5px;background:#c9c9c9"></div>
<div class="abs" style="left:0.0px;top:218.5px;width:25.7px;height:487.8px;background:#f0f0f0;border-right:1px solid #ababab"></div>
<div class="abs" style="left:0.0px;top:261.3px;width:25.2px;height:1.0px;background:#c9c9c9"></div>
<div class="abs" style="left:0;top:218.5px;width:25px;height:43.3px;overflow:hidden"><div class="t" style="left:10.0px;top:30.5px;font-size:10.8px;color:#2b2b2b">1</div></div>
<div class="abs" style="left:0.0px;top:295.1px;width:25.2px;height:1.0px;background:#c9c9c9"></div>
<div class="abs" style="left:0;top:261.8px;width:25px;height:33.8px;overflow:hidden"><div class="t" style="left:10.0px;top:21.0px;font-size:10.8px;color:#2b2b2b">2</div></div>
<div class="abs" style="left:0.0px;top:303.3px;width:25.2px;height:1.0px;background:#c9c9c9"></div>
<div class="abs" style="left:0;top:295.6px;width:25px;height:8.2px;overflow:hidden"><div class="t" style="left:10.0px;top:-4.6px;font-size:10.8px;color:#2b2b2b">3</div></div>
<div class="abs" style="left:0.0px;top:341.5px;width:25.2px;height:1.0px;background:#c9c9c9"></div>
<div class="abs" style="left:0;top:303.8px;width:25px;height:38.2px;overflow:hidden"><div class="t" style="left:10.0px;top:25.4px;font-size:10.8px;color:#2b2b2b">4</div></div>
<div class="abs" style="left:0.0px;top:350.8px;width:25.2px;height:1.0px;background:#c9c9c9"></div>
<div class="abs" style="left:0;top:342.0px;width:25px;height:9.3px;overflow:hidden"><div class="t" style="left:10.0px;top:-3.5px;font-size:10.8px;color:#2b2b2b">5</div></div>
<div class="abs" style="left:0.0px;top:384.0px;width:25.2px;height:1.0px;background:#c9c9c9"></div>
<div class="abs" style="left:0;top:351.3px;width:25px;height:33.2px;overflow:hidden"><div class="t" style="left:10.0px;top:20.4px;font-size:10.8px;color:#2b2b2b">6</div></div>
<div class="abs" style="left:0.0px;top:427.7px;width:25.2px;height:1.0px;background:#c9c9c9"></div>
<div class="abs" style="left:0;top:384.5px;width:25px;height:43.7px;overflow:hidden"><div class="t" style="left:10.0px;top:30.9px;font-size:10.8px;color:#2b2b2b">7</div></div>
<div class="abs" style="left:0.0px;top:471.4px;width:25.2px;height:1.0px;background:#c9c9c9"></div>
<div class="abs" style="left:0;top:428.2px;width:25px;height:43.7px;overflow:hidden"><div class="t" style="left:10.0px;top:30.9px;font-size:10.8px;color:#2b2b2b">8</div></div>
<div class="abs" style="left:0.0px;top:515.1px;width:25.2px;height:1.0px;background:#c9c9c9"></div>
<div class="abs" style="left:0;top:471.9px;width:25px;height:43.7px;overflow:hidden"><div class="t" style="left:10.0px;top:30.9px;font-size:10.8px;color:#2b2b2b">9</div></div>
<div class="abs" style="left:0.0px;top:558.8px;width:25.2px;height:1.0px;background:#c9c9c9"></div>
<div class="abs" style="left:0;top:515.6px;width:25px;height:43.7px;overflow:hidden"><div class="t" style="left:7.0px;top:30.9px;font-size:10.8px;color:#2b2b2b">10</div></div>
<div class="abs" style="left:0.0px;top:602.6px;width:25.2px;height:1.0px;background:#c9c9c9"></div>
<div class="abs" style="left:0;top:559.3px;width:25px;height:43.8px;overflow:hidden"><div class="t" style="left:7.4px;top:31.0px;font-size:10.8px;color:#2b2b2b">11</div></div>
<div class="abs" style="left:0.0px;top:647.2px;width:25.2px;height:1.0px;background:#c9c9c9"></div>
<div class="abs" style="left:0;top:603.1px;width:25px;height:44.6px;overflow:hidden"><div class="t" style="left:7.0px;top:31.8px;font-size:10.8px;color:#2b2b2b">12</div></div>
<div class="abs" style="left:0.0px;top:663.8px;width:25.2px;height:1.0px;background:#c9c9c9"></div>
<div class="abs" style="left:0;top:647.7px;width:25px;height:16.6px;overflow:hidden"><div class="t" style="left:7.0px;top:3.8px;font-size:10.8px;color:#2b2b2b">13</div></div>
<div class="abs" style="left:0.0px;top:680.6px;width:25.2px;height:1.0px;background:#c9c9c9"></div>
<div class="abs" style="left:0;top:664.3px;width:25px;height:16.8px;overflow:hidden"><div class="t" style="left:7.0px;top:4.0px;font-size:10.8px;color:#2b2b2b">14</div></div>
<div class="abs" style="left:0.0px;top:697.6px;width:25.2px;height:1.0px;background:#c9c9c9"></div>
<div class="abs" style="left:0;top:681.1px;width:25px;height:17.0px;overflow:hidden"><div class="t" style="left:7.0px;top:4.2px;font-size:10.8px;color:#2b2b2b">15</div></div>
<div class="abs" style="left:0;top:698.1px;width:25px;height:8.2px;overflow:hidden"><div class="t" style="left:7.0px;top:4.1px;font-size:10.8px;color:#2b2b2b">16</div></div>
<!-- g_content -->
<div class="abs" style="left:26.2px;top:218.9px;width:1553.8px;height:42.9px;background:#e6e6e6"></div>
<div class="abs" style="left:26.2px;top:261.8px;width:1553.8px;height:33.8px;background:#404040"></div>
<div class="abs" style="left:122.0px;top:270.0px;width:111.1px;height:25.8px;background:#fff"></div>
<div class="abs" style="left:446.0px;top:218.9px;width:92.0px;height:43.3px;background:#404040"></div>
<div class="t" style="left:159.4px;top:228.7px;font-size:10.9px;font-weight:700;color:#1a1a1a;transform:scaleX(0.933);transform-origin:0 0;">INFORMAÇÕES</div>
<div class="t" style="left:177.4px;top:243.3px;font-size:10.9px;font-weight:700;color:#1a1a1a;transform:scaleX(0.936);transform-origin:0 0;">INICIAIS</div>
<div class="t" style="left:270.7px;top:228.7px;font-size:10.9px;font-weight:700;color:#1a1a1a;transform:scaleX(0.885);transform-origin:0 0;">GESTÃO DE</div>
<div class="t" style="left:257.5px;top:243.3px;font-size:10.9px;font-weight:700;color:#1a1a1a;transform:scaleX(0.945);transform-origin:0 0;">INVESTIMENTOS</div>
<div class="t" style="left:367.3px;top:235.8px;font-size:10.9px;font-weight:700;color:#1a1a1a;transform:scaleX(0.900);transform-origin:0 0;">RELATÓRIOS</div>
<div class="t" style="left:462.0px;top:228.7px;font-size:10.9px;font-weight:700;color:#fff;transform:scaleX(0.902);transform-origin:0 0;">ANÁLISE DE</div>
<div class="t" style="left:473.0px;top:243.3px;font-size:10.9px;font-weight:700;color:#fff;transform:scaleX(0.956);transform-origin:0 0;">ATIVOS</div>
<div class="t" style="left:550.5px;top:235.8px;font-size:10.9px;font-weight:700;color:#1a1a1a;transform:scaleX(0.916);transform-origin:0 0;">DASHBOARDS</div>
<div class="t" style="left:647.0px;top:235.8px;font-size:10.9px;font-weight:700;color:#1a1a1a;transform:scaleX(0.896);transform-origin:0 0;">INSTRUÇÕES</div>
<div class="t" style="left:153.4px;top:278.8px;font-size:10.9px;font-weight:700;color:#404040;transform:scaleX(0.930);transform-origin:0 0;">POR TIPO</div>
<div class="t" style="left:253.4px;top:278.8px;font-size:10.9px;font-weight:700;color:#fff;transform:scaleX(0.960);transform-origin:0 0;">QUINQUENAL</div>
<div class="t" style="left:363.0px;top:278.8px;font-size:10.9px;font-weight:700;color:#fff;transform:scaleX(0.901);transform-origin:0 0;">ALOCAÇÃO</div>
<svg style="left:0;top:0" width="130" height="300" viewBox="0 0 130 300"><polygon points="44.5,237.5 57.9,237.5 67.4,247.0 67.4,260.4 57.9,269.9 44.5,269.9 35.0,260.4 35.0,247.0" fill="#c6ecb8"/><polygon points="93.9,237.9 107.3,237.9 116.8,247.4 116.8,260.8 107.3,270.3 93.9,270.3 84.4,260.8 84.4,247.4" fill="#c6ecb8"/><polygon points="67.9,241.0 81.1,241.0 90.5,250.4 90.5,263.6 81.1,273.0 67.9,273.0 58.5,263.6 58.5,250.4" fill="#7c7c7c" opacity="0.88"/><polygon points="53.4,223.3 66.6,223.3 76.0,232.7 76.0,245.9 66.6,255.3 53.4,255.3 44.0,245.9 44.0,232.7" fill="#0cb958"/><polygon points="83.9,255.6 97.1,255.6 106.5,265.0 106.5,278.2 97.1,287.6 83.9,287.6 74.5,278.2 74.5,265.0" fill="#0cb958"/><polygon points="44.5,237.5 57.9,237.5 67.4,247.0 67.4,260.4 57.9,269.9 44.5,269.9 35.0,260.4 35.0,247.0" fill="#c6ecb8" opacity="0.2"/><polygon points="93.9,237.9 107.3,237.9 116.8,247.4 116.8,260.8 107.3,270.3 93.9,270.3 84.4,260.8 84.4,247.4" fill="#c6ecb8" opacity="0.2"/></svg>
<div class="t" style="left:27.7px;top:296.3px;font-size:12.0px;letter-spacing:0.07px;font-weight:700;color:#050505;font-family:'DejaVu Sans','Liberation Sans',sans-serif;-webkit-text-stroke:.95px #050505;">SHEETS TECH</div>
<div class="t" style="left:95.0px;top:318.8px;font-size:11.4px;color:#262626;transform:scaleX(1.074);transform-origin:0 0;">Ativo:</div>
<div class="t" style="left:257.0px;top:319.0px;font-size:11.2px;font-weight:700;color:#111;transform:scaleX(0.904);transform-origin:0 0;">LCI</div>
<div class="t" style="left:437.0px;top:318.8px;font-size:11.4px;letter-spacing:0.19px;color:#262626;">Ano:</div>
<div class="t" style="left:503.5px;top:319.0px;font-size:11.2px;font-weight:700;color:#111;transform:scaleX(1.045);transform-origin:0 0;">2026</div>
<div class="t" style="left:1475.0px;top:318.6px;font-size:11.2px;color:#262626;transform:scaleX(0.930);transform-origin:0 0;">2</div>
<div class="t" style="left:1541.5px;top:318.6px;font-size:11.2px;color:#262626;transform:scaleX(0.878);transform-origin:0 0;">LCI</div>
<div class="abs" style="left:1440px;top:342px;width:140px;height:8.400px;overflow:hidden"><div class="t" style="left:35.0px;top:0.2px;font-size:11.2px;color:#262626;transform:scaleX(0.898);transform-origin:0 0;">7</div><div class="t" style="left:96.5px;top:0.2px;font-size:11.2px;color:#262626;transform:scaleX(1.045);transform-origin:0 0;">2026</div></div>
<!-- g_table -->
<div class="abs" style="left:50.7px;top:352.8px;width:87.1px;height:31.1px;background:#d9d9d9"></div>
<div class="t" style="left:62.8px;top:363.2px;font-size:10.9px;font-weight:700;color:#404040;transform:scaleX(0.947);transform-origin:0 0;">Tipo</div>
<div class="abs" style="left:140.3px;top:352.8px;width:81.3px;height:31.1px;background:#d9d9d9"></div>
<div class="t" style="left:152.3px;top:363.2px;font-size:10.9px;font-weight:700;color:#404040;transform:scaleX(0.968);transform-origin:0 0;">Janeiro</div>
<div class="abs" style="left:224.1px;top:352.8px;width:81.3px;height:31.1px;background:#d9d9d9"></div>
<div class="t" style="left:236.3px;top:363.2px;font-size:10.9px;letter-spacing:0.13px;font-weight:700;color:#404040;">Fevereiro</div>
<div class="abs" style="left:307.9px;top:352.8px;width:81.3px;height:31.1px;background:#d9d9d9"></div>
<div class="t" style="left:320.0px;top:363.2px;font-size:10.9px;letter-spacing:0.23px;font-weight:700;color:#404040;">Março</div>
<div class="abs" style="left:391.7px;top:352.8px;width:81.3px;height:31.1px;background:#d9d9d9"></div>
<div class="t" style="left:404.0px;top:363.2px;font-size:10.9px;letter-spacing:0.05px;font-weight:700;color:#404040;">Abril</div>
<div class="abs" style="left:475.5px;top:352.8px;width:81.3px;height:31.1px;background:#d9d9d9"></div>
<div class="t" style="left:487.5px;top:363.2px;font-size:10.9px;font-weight:700;color:#404040;transform:scaleX(1.048);transform-origin:0 0;">Maio</div>
<div class="abs" style="left:559.3px;top:352.8px;width:81.3px;height:31.1px;background:#d9d9d9"></div>
<div class="t" style="left:571.5px;top:363.2px;font-size:10.9px;font-weight:700;color:#404040;transform:scaleX(0.934);transform-origin:0 0;">Junho</div>
<div class="abs" style="left:643.1px;top:352.8px;width:81.3px;height:31.1px;background:#d9d9d9"></div>
<div class="t" style="left:655.5px;top:363.2px;font-size:10.9px;font-weight:700;color:#404040;transform:scaleX(0.947);transform-origin:0 0;">Julho</div>
<div class="abs" style="left:726.9px;top:352.8px;width:81.3px;height:31.1px;background:#d9d9d9"></div>
<div class="t" style="left:739.0px;top:363.2px;font-size:10.9px;font-weight:700;color:#404040;transform:scaleX(0.960);transform-origin:0 0;">Agosto</div>
<div class="abs" style="left:810.7px;top:352.8px;width:81.3px;height:31.1px;background:#d9d9d9"></div>
<div class="t" style="left:822.5px;top:363.2px;font-size:10.9px;letter-spacing:0.18px;font-weight:700;color:#404040;">Setembro</div>
<div class="abs" style="left:894.5px;top:352.8px;width:81.3px;height:31.1px;background:#d9d9d9"></div>
<div class="t" style="left:906.5px;top:363.2px;font-size:10.9px;letter-spacing:0.17px;font-weight:700;color:#404040;">Outubro</div>
<div class="abs" style="left:978.3px;top:352.8px;width:81.3px;height:31.1px;background:#d9d9d9"></div>
<div class="t" style="left:990.5px;top:363.2px;font-size:10.9px;letter-spacing:0.16px;font-weight:700;color:#404040;">Novembro</div>
<div class="abs" style="left:1062.1px;top:352.8px;width:81.9px;height:31.1px;background:#d9d9d9"></div>
<div class="t" style="left:1074.5px;top:363.2px;font-size:10.9px;letter-spacing:0.19px;font-weight:700;color:#404040;">Dezembro</div>
<div class="abs" style="left:1146.0px;top:352.8px;width:81.6px;height:31.1px;background:#808080"></div>
<div class="t" style="left:1158.0px;top:363.2px;font-size:10.9px;letter-spacing:0.10px;font-weight:700;color:#fff;">Total</div>
<div class="abs" style="left:50.7px;top:386.2px;width:87.1px;height:41.1px;background:#d9d9d9"></div>
<div class="t" style="left:62.8px;top:394.1px;font-size:10.9px;letter-spacing:0.09px;font-weight:700;color:#404040;">Valor</div>
<div class="t" style="left:62.8px;top:410.1px;font-size:10.9px;letter-spacing:-0.04px;font-weight:700;color:#404040;">investido</div>
<div class="abs" style="left:140.1px;top:384.5px;width:1004.9px;height:43.2px;background:#f2f2f2"></div>
<div class="abs" style="left:1145.0px;top:384.5px;width:83.5px;height:43.2px;background:#808080"></div>
<div class="abs" style="left:222.7px;top:384.5px;width:1.1px;height:43.2px;background:#d2d2d2"></div>
<div class="abs" style="left:306.5px;top:384.5px;width:1.1px;height:43.2px;background:#d2d2d2"></div>
<div class="abs" style="left:390.3px;top:384.5px;width:1.1px;height:43.2px;background:#d2d2d2"></div>
<div class="abs" style="left:474.1px;top:384.5px;width:1.1px;height:43.2px;background:#d2d2d2"></div>
<div class="abs" style="left:557.9px;top:384.5px;width:1.1px;height:43.2px;background:#d2d2d2"></div>
<div class="abs" style="left:641.7px;top:384.5px;width:1.1px;height:43.2px;background:#d2d2d2"></div>
<div class="abs" style="left:725.5px;top:384.5px;width:1.1px;height:43.2px;background:#d2d2d2"></div>
<div class="abs" style="left:809.3px;top:384.5px;width:1.1px;height:43.2px;background:#d2d2d2"></div>
<div class="abs" style="left:893.1px;top:384.5px;width:1.1px;height:43.2px;background:#d2d2d2"></div>
<div class="abs" style="left:976.9px;top:384.5px;width:1.1px;height:43.2px;background:#d2d2d2"></div>
<div class="abs" style="left:1060.7px;top:384.5px;width:1.1px;height:43.2px;background:#d2d2d2"></div>
<div class="abs" style="left:1144.5px;top:384.5px;width:1.1px;height:43.2px;background:#b9b9b9"></div>
<div class="abs" style="left:1227.7px;top:384.5px;width:0.8px;height:43.2px;background:#a9a9a9"></div>
<div class="abs" style="left:140.1px;top:427.8px;width:1004.9px;height:0.9px;background:#fafafa"></div>
<div class="abs" style="left:1145.0px;top:427.8px;width:83.5px;height:0.9px;background:#b4b4b4"></div>
<div class="tri" style="left:140.2px;top:384.5px"></div>
<div class="tri" style="left:224.0px;top:384.5px"></div>
<div class="tri" style="left:307.8px;top:384.5px"></div>
<div class="tri" style="left:391.6px;top:384.5px"></div>
<div class="tri" style="left:475.4px;top:384.5px"></div>
<div class="tri" style="left:559.2px;top:384.5px"></div>
<div class="tri" style="left:643.0px;top:384.5px"></div>
<div class="tri" style="left:726.8px;top:384.5px"></div>
<div class="tri" style="left:810.6px;top:384.5px"></div>
<div class="tri" style="left:894.4px;top:384.5px"></div>
<div class="tri" style="left:978.2px;top:384.5px"></div>
<div class="tri" style="left:1062.0px;top:384.5px"></div>
<div class="t" style="left:147.4px;top:402.7px;font-size:9.3px;color:#303030;-webkit-text-stroke:.22px #303030;">R$ 2.000.000,00</div>
<div class="t" style="left:231.2px;top:402.7px;font-size:9.3px;color:#303030;-webkit-text-stroke:.22px #303030;">R$ 2.000.000,00</div>
<div class="t" style="left:315.0px;top:402.7px;font-size:9.3px;color:#303030;-webkit-text-stroke:.22px #303030;">R$ 1.000.000,00</div>
<div class="t" style="left:398.8px;top:402.7px;font-size:9.3px;color:#303030;-webkit-text-stroke:.22px #303030;">R$ 3.800.000,00</div>
<div class="t" style="left:501.0px;top:402.7px;font-size:9.3px;letter-spacing:-0.14px;color:#303030;-webkit-text-stroke:.22px #303030;">R$ 0,00</div>
<div class="t" style="left:584.8px;top:402.7px;font-size:9.3px;letter-spacing:-0.14px;color:#303030;-webkit-text-stroke:.22px #303030;">R$ 0,00</div>
<div class="t" style="left:668.6px;top:402.7px;font-size:9.3px;letter-spacing:-0.14px;color:#303030;-webkit-text-stroke:.22px #303030;">R$ 0,00</div>
<div class="t" style="left:752.4px;top:402.7px;font-size:9.3px;letter-spacing:-0.14px;color:#303030;-webkit-text-stroke:.22px #303030;">R$ 0,00</div>
<div class="t" style="left:817.8px;top:402.7px;font-size:9.3px;color:#303030;-webkit-text-stroke:.22px #303030;">R$ 3.000.000,00</div>
<div class="t" style="left:905.5px;top:402.7px;font-size:9.3px;letter-spacing:-0.02px;color:#303030;-webkit-text-stroke:.22px #303030;">R$ 950.000,00</div>
<div class="t" style="left:985.4px;top:402.7px;font-size:9.3px;color:#303030;-webkit-text-stroke:.22px #303030;">R$ 1.000.000,00</div>
<div class="t" style="left:1069.2px;top:402.7px;font-size:9.3px;color:#303030;-webkit-text-stroke:.22px #303030;">R$ 5.000.000,00</div>
<div class="t" style="left:1150.2px;top:402.7px;font-size:9.3px;color:#e4e4e4;-webkit-text-stroke:.22px #e4e4e4;">R$ 18.750.000,00</div>
<div class="abs" style="left:50.7px;top:429.9px;width:87.1px;height:41.1px;background:#d9d9d9"></div>
<div class="t" style="left:62.8px;top:445.9px;font-size:10.9px;letter-spacing:0.13px;font-weight:700;color:#404040;">Valor retirado</div>
<div class="abs" style="left:140.1px;top:428.6px;width:1004.9px;height:42.8px;background:#f2f2f2"></div>
<div class="abs" style="left:1145.0px;top:428.6px;width:83.5px;height:42.8px;background:#808080"></div>
<div class="abs" style="left:222.7px;top:428.6px;width:1.1px;height:42.8px;background:#d2d2d2"></div>
<div class="abs" style="left:306.5px;top:428.6px;width:1.1px;height:42.8px;background:#d2d2d2"></div>
<div class="abs" style="left:390.3px;top:428.6px;width:1.1px;height:42.8px;background:#d2d2d2"></div>
<div class="abs" style="left:474.1px;top:428.6px;width:1.1px;height:42.8px;background:#d2d2d2"></div>
<div class="abs" style="left:557.9px;top:428.6px;width:1.1px;height:42.8px;background:#d2d2d2"></div>
<div class="abs" style="left:641.7px;top:428.6px;width:1.1px;height:42.8px;background:#d2d2d2"></div>
<div class="abs" style="left:725.5px;top:428.6px;width:1.1px;height:42.8px;background:#d2d2d2"></div>
<div class="abs" style="left:809.3px;top:428.6px;width:1.1px;height:42.8px;background:#d2d2d2"></div>
<div class="abs" style="left:893.1px;top:428.6px;width:1.1px;height:42.8px;background:#d2d2d2"></div>
<div class="abs" style="left:976.9px;top:428.6px;width:1.1px;height:42.8px;background:#d2d2d2"></div>
<div class="abs" style="left:1060.7px;top:428.6px;width:1.1px;height:42.8px;background:#d2d2d2"></div>
<div class="abs" style="left:1144.5px;top:428.6px;width:1.1px;height:42.8px;background:#b9b9b9"></div>
<div class="abs" style="left:1227.7px;top:428.6px;width:0.8px;height:42.8px;background:#a9a9a9"></div>
<div class="tri" style="left:140.2px;top:428.6px"></div>
<div class="tri" style="left:224.0px;top:428.6px"></div>
<div class="tri" style="left:307.8px;top:428.6px"></div>
<div class="tri" style="left:391.6px;top:428.6px"></div>
<div class="tri" style="left:475.4px;top:428.6px"></div>
<div class="tri" style="left:559.2px;top:428.6px"></div>
<div class="tri" style="left:643.0px;top:428.6px"></div>
<div class="tri" style="left:726.8px;top:428.6px"></div>
<div class="tri" style="left:810.6px;top:428.6px"></div>
<div class="tri" style="left:894.4px;top:428.6px"></div>
<div class="tri" style="left:978.2px;top:428.6px"></div>
<div class="tri" style="left:1062.0px;top:428.6px"></div>
<div class="t" style="left:165.8px;top:446.4px;font-size:9.3px;letter-spacing:-0.14px;color:#303030;-webkit-text-stroke:.22px #303030;">R$ 0,00</div>
<div class="t" style="left:235.1px;top:446.4px;font-size:9.3px;letter-spacing:-0.02px;color:#303030;-webkit-text-stroke:.22px #303030;">R$ 980.000,00</div>
<div class="t" style="left:333.4px;top:446.4px;font-size:9.3px;letter-spacing:-0.14px;color:#303030;-webkit-text-stroke:.22px #303030;">R$ 0,00</div>
<div class="t" style="left:398.8px;top:446.4px;font-size:9.3px;color:#303030;-webkit-text-stroke:.22px #303030;">R$ 1.050.000,00</div>
<div class="t" style="left:501.0px;top:446.4px;font-size:9.3px;letter-spacing:-0.14px;color:#303030;-webkit-text-stroke:.22px #303030;">R$ 0,00</div>
<div class="t" style="left:566.4px;top:446.4px;font-size:9.3px;color:#303030;-webkit-text-stroke:.22px #303030;">R$ 1.050.000,00</div>
<div class="t" style="left:650.2px;top:446.4px;font-size:9.3px;color:#303030;-webkit-text-stroke:.22px #303030;">R$ 1.050.000,00</div>
<div class="t" style="left:734.0px;top:446.4px;font-size:9.3px;color:#303030;-webkit-text-stroke:.22px #303030;">R$ 1.200.000,00</div>
<div class="t" style="left:836.2px;top:446.4px;font-size:9.3px;letter-spacing:-0.14px;color:#303030;-webkit-text-stroke:.22px #303030;">R$ 0,00</div>
<div class="t" style="left:901.6px;top:446.4px;font-size:9.3px;color:#303030;-webkit-text-stroke:.22px #303030;">R$ 2.100.000,00</div>
<div class="t" style="left:1003.8px;top:446.4px;font-size:9.3px;letter-spacing:-0.14px;color:#303030;-webkit-text-stroke:.22px #303030;">R$ 0,00</div>
<div class="t" style="left:1069.2px;top:446.4px;font-size:9.3px;color:#303030;-webkit-text-stroke:.22px #303030;">R$ 1.050.000,00</div>
<div class="t" style="left:1152.8px;top:446.4px;font-size:9.3px;color:#e4e4e4;-webkit-text-stroke:.22px #e4e4e4;">R$ 8.480.000,00</div>
<div class="abs" style="left:50.7px;top:473.6px;width:87.1px;height:41.1px;background:#375623"></div>
<div class="t" style="left:62.8px;top:481.5px;font-size:10.9px;letter-spacing:0.19px;font-weight:700;color:#fff;">Rendimento</div>
<div class="t" style="left:62.8px;top:497.5px;font-size:10.9px;letter-spacing:0.17px;font-weight:700;color:#fff;">bruto</div>
<div class="abs" style="left:140.1px;top:472.3px;width:1088.4px;height:42.8px;background:#375623"></div>
<div class="abs" style="left:222.7px;top:472.3px;width:1.1px;height:42.8px;background:#b4c4a6"></div>
<div class="abs" style="left:306.5px;top:472.3px;width:1.1px;height:42.8px;background:#b4c4a6"></div>
<div class="abs" style="left:390.3px;top:472.3px;width:1.1px;height:42.8px;background:#b4c4a6"></div>
<div class="abs" style="left:474.1px;top:472.3px;width:1.1px;height:42.8px;background:#b4c4a6"></div>
<div class="abs" style="left:557.9px;top:472.3px;width:1.1px;height:42.8px;background:#b4c4a6"></div>
<div class="abs" style="left:641.7px;top:472.3px;width:1.1px;height:42.8px;background:#b4c4a6"></div>
<div class="abs" style="left:725.5px;top:472.3px;width:1.1px;height:42.8px;background:#b4c4a6"></div>
<div class="abs" style="left:809.3px;top:472.3px;width:1.1px;height:42.8px;background:#b4c4a6"></div>
<div class="abs" style="left:893.1px;top:472.3px;width:1.1px;height:42.8px;background:#b4c4a6"></div>
<div class="abs" style="left:976.9px;top:472.3px;width:1.1px;height:42.8px;background:#b4c4a6"></div>
<div class="abs" style="left:1060.7px;top:472.3px;width:1.1px;height:42.8px;background:#b4c4a6"></div>
<div class="abs" style="left:1144.5px;top:472.3px;width:1.1px;height:42.8px;background:#b4c4a6"></div>
<div class="tri" style="left:140.2px;top:472.3px;border-top-color:#1c7536"></div>
<div class="tri" style="left:224.0px;top:472.3px;border-top-color:#1c7536"></div>
<div class="tri" style="left:307.8px;top:472.3px;border-top-color:#1c7536"></div>
<div class="tri" style="left:391.6px;top:472.3px;border-top-color:#1c7536"></div>
<div class="tri" style="left:475.4px;top:472.3px;border-top-color:#1c7536"></div>
<div class="tri" style="left:559.2px;top:472.3px;border-top-color:#1c7536"></div>
<div class="tri" style="left:643.0px;top:472.3px;border-top-color:#1c7536"></div>
<div class="tri" style="left:726.8px;top:472.3px;border-top-color:#1c7536"></div>
<div class="tri" style="left:810.6px;top:472.3px;border-top-color:#1c7536"></div>
<div class="tri" style="left:894.4px;top:472.3px;border-top-color:#1c7536"></div>
<div class="tri" style="left:978.2px;top:472.3px;border-top-color:#1c7536"></div>
<div class="tri" style="left:1062.0px;top:472.3px;border-top-color:#1c7536"></div>
<div class="t" style="left:165.8px;top:490.1px;font-size:9.3px;letter-spacing:-0.14px;color:#e2efda;-webkit-text-stroke:.22px #e2efda;">R$ 0,00</div>
<div class="t" style="left:237.7px;top:490.1px;font-size:9.3px;letter-spacing:-0.03px;color:#e2efda;-webkit-text-stroke:.22px #e2efda;">R$ 30.000,00</div>
<div class="t" style="left:333.4px;top:490.1px;font-size:9.3px;letter-spacing:-0.14px;color:#e2efda;-webkit-text-stroke:.22px #e2efda;">R$ 0,00</div>
<div class="t" style="left:405.3px;top:490.1px;font-size:9.3px;letter-spacing:-0.03px;color:#e2efda;-webkit-text-stroke:.22px #e2efda;">R$ 50.000,00</div>
<div class="t" style="left:501.0px;top:490.1px;font-size:9.3px;letter-spacing:-0.14px;color:#e2efda;-webkit-text-stroke:.22px #e2efda;">R$ 0,00</div>
<div class="t" style="left:572.9px;top:490.1px;font-size:9.3px;letter-spacing:-0.03px;color:#e2efda;-webkit-text-stroke:.22px #e2efda;">R$ 50.000,00</div>
<div class="t" style="left:656.7px;top:490.1px;font-size:9.3px;letter-spacing:-0.03px;color:#e2efda;-webkit-text-stroke:.22px #e2efda;">R$ 50.000,00</div>
<div class="t" style="left:737.9px;top:490.1px;font-size:9.3px;letter-spacing:-0.02px;color:#e2efda;-webkit-text-stroke:.22px #e2efda;">R$ 200.000,00</div>
<div class="t" style="left:836.2px;top:490.1px;font-size:9.3px;letter-spacing:-0.14px;color:#e2efda;-webkit-text-stroke:.22px #e2efda;">R$ 0,00</div>
<div class="t" style="left:905.5px;top:490.1px;font-size:9.3px;letter-spacing:-0.02px;color:#e2efda;-webkit-text-stroke:.22px #e2efda;">R$ 300.000,00</div>
<div class="t" style="left:1003.8px;top:490.1px;font-size:9.3px;letter-spacing:-0.14px;color:#e2efda;-webkit-text-stroke:.22px #e2efda;">R$ 0,00</div>
<div class="t" style="left:1075.7px;top:490.1px;font-size:9.3px;letter-spacing:-0.03px;color:#e2efda;-webkit-text-stroke:.22px #e2efda;">R$ 50.000,00</div>
<div class="t" style="left:1156.8px;top:490.1px;font-size:9.3px;letter-spacing:-0.02px;color:#e2efda;-webkit-text-stroke:.22px #e2efda;">R$ 730.000,00</div>
<div class="abs" style="left:50.7px;top:517.3px;width:87.1px;height:41.1px;background:#d9d9d9"></div>
<div class="t" style="left:62.8px;top:533.3px;font-size:10.9px;font-weight:700;color:#404040;transform:scaleX(0.964);transform-origin:0 0;">Taxas</div>
<div class="abs" style="left:140.1px;top:516.1px;width:1004.9px;height:42.8px;background:#f2f2f2"></div>
<div class="abs" style="left:1145.0px;top:516.1px;width:83.5px;height:42.8px;background:#808080"></div>
<div class="abs" style="left:222.7px;top:516.1px;width:1.1px;height:42.8px;background:#d2d2d2"></div>
<div class="abs" style="left:306.5px;top:516.1px;width:1.1px;height:42.8px;background:#d2d2d2"></div>
<div class="abs" style="left:390.3px;top:516.1px;width:1.1px;height:42.8px;background:#d2d2d2"></div>
<div class="abs" style="left:474.1px;top:516.1px;width:1.1px;height:42.8px;background:#d2d2d2"></div>
<div class="abs" style="left:557.9px;top:516.1px;width:1.1px;height:42.8px;background:#d2d2d2"></div>
<div class="abs" style="left:641.7px;top:516.1px;width:1.1px;height:42.8px;background:#d2d2d2"></div>
<div class="abs" style="left:725.5px;top:516.1px;width:1.1px;height:42.8px;background:#d2d2d2"></div>
<div class="abs" style="left:809.3px;top:516.1px;width:1.1px;height:42.8px;background:#d2d2d2"></div>
<div class="abs" style="left:893.1px;top:516.1px;width:1.1px;height:42.8px;background:#d2d2d2"></div>
<div class="abs" style="left:976.9px;top:516.1px;width:1.1px;height:42.8px;background:#d2d2d2"></div>
<div class="abs" style="left:1060.7px;top:516.1px;width:1.1px;height:42.8px;background:#d2d2d2"></div>
<div class="abs" style="left:1144.5px;top:516.1px;width:1.1px;height:42.8px;background:#b9b9b9"></div>
<div class="abs" style="left:1227.7px;top:516.1px;width:0.8px;height:42.8px;background:#a9a9a9"></div>
<div class="tri" style="left:140.2px;top:516.1px"></div>
<div class="tri" style="left:224.0px;top:516.1px"></div>
<div class="tri" style="left:307.8px;top:516.1px"></div>
<div class="tri" style="left:391.6px;top:516.1px"></div>
<div class="tri" style="left:475.4px;top:516.1px"></div>
<div class="tri" style="left:559.2px;top:516.1px"></div>
<div class="tri" style="left:643.0px;top:516.1px"></div>
<div class="tri" style="left:726.8px;top:516.1px"></div>
<div class="tri" style="left:810.6px;top:516.1px"></div>
<div class="tri" style="left:894.4px;top:516.1px"></div>
<div class="tri" style="left:978.2px;top:516.1px"></div>
<div class="tri" style="left:1062.0px;top:516.1px"></div>
<div class="t" style="left:165.8px;top:533.8px;font-size:9.3px;letter-spacing:-0.14px;color:#303030;-webkit-text-stroke:.22px #303030;">R$ 0,00</div>
<div class="t" style="left:237.7px;top:533.8px;font-size:9.3px;letter-spacing:-0.03px;color:#303030;-webkit-text-stroke:.22px #303030;">R$ 50.000,00</div>
<div class="t" style="left:333.4px;top:533.8px;font-size:9.3px;letter-spacing:-0.14px;color:#303030;-webkit-text-stroke:.22px #303030;">R$ 0,00</div>
<div class="t" style="left:405.3px;top:533.8px;font-size:9.3px;letter-spacing:-0.03px;color:#303030;-webkit-text-stroke:.22px #303030;">R$ 50.000,00</div>
<div class="t" style="left:501.0px;top:533.8px;font-size:9.3px;letter-spacing:-0.14px;color:#303030;-webkit-text-stroke:.22px #303030;">R$ 0,00</div>
<div class="t" style="left:572.9px;top:533.8px;font-size:9.3px;letter-spacing:-0.03px;color:#303030;-webkit-text-stroke:.22px #303030;">R$ 50.000,00</div>
<div class="t" style="left:656.7px;top:533.8px;font-size:9.3px;letter-spacing:-0.03px;color:#303030;-webkit-text-stroke:.22px #303030;">R$ 50.000,00</div>
<div class="t" style="left:743.2px;top:533.8px;font-size:9.3px;letter-spacing:-0.04px;color:#303030;-webkit-text-stroke:.22px #303030;">R$ 5.000,00</div>
<div class="t" style="left:836.2px;top:533.8px;font-size:9.3px;letter-spacing:-0.14px;color:#303030;-webkit-text-stroke:.22px #303030;">R$ 0,00</div>
<div class="t" style="left:908.1px;top:533.8px;font-size:9.3px;letter-spacing:-0.03px;color:#303030;-webkit-text-stroke:.22px #303030;">R$ 10.000,00</div>
<div class="t" style="left:1003.8px;top:533.8px;font-size:9.3px;letter-spacing:-0.14px;color:#303030;-webkit-text-stroke:.22px #303030;">R$ 0,00</div>
<div class="t" style="left:1075.7px;top:533.8px;font-size:9.3px;letter-spacing:-0.03px;color:#303030;-webkit-text-stroke:.22px #303030;">R$ 50.000,00</div>
<div class="t" style="left:1156.8px;top:533.8px;font-size:9.3px;letter-spacing:-0.02px;color:#e4e4e4;-webkit-text-stroke:.22px #e4e4e4;">R$ 265.000,00</div>
<div class="abs" style="left:50.7px;top:561.0px;width:87.1px;height:41.2px;background:#375623"></div>
<div class="t" style="left:62.8px;top:568.9px;font-size:10.9px;letter-spacing:0.19px;font-weight:700;color:#fff;">Rendimento</div>
<div class="t" style="left:62.8px;top:584.9px;font-size:10.9px;letter-spacing:-0.11px;font-weight:700;color:#fff;">líquido</div>
<div class="abs" style="left:140.1px;top:559.8px;width:1088.4px;height:42.9px;background:#375623"></div>
<div class="abs" style="left:222.7px;top:559.8px;width:1.1px;height:42.9px;background:#b4c4a6"></div>
<div class="abs" style="left:306.5px;top:559.8px;width:1.1px;height:42.9px;background:#b4c4a6"></div>
<div class="abs" style="left:390.3px;top:559.8px;width:1.1px;height:42.9px;background:#b4c4a6"></div>
<div class="abs" style="left:474.1px;top:559.8px;width:1.1px;height:42.9px;background:#b4c4a6"></div>
<div class="abs" style="left:557.9px;top:559.8px;width:1.1px;height:42.9px;background:#b4c4a6"></div>
<div class="abs" style="left:641.7px;top:559.8px;width:1.1px;height:42.9px;background:#b4c4a6"></div>
<div class="abs" style="left:725.5px;top:559.8px;width:1.1px;height:42.9px;background:#b4c4a6"></div>
<div class="abs" style="left:809.3px;top:559.8px;width:1.1px;height:42.9px;background:#b4c4a6"></div>
<div class="abs" style="left:893.1px;top:559.8px;width:1.1px;height:42.9px;background:#b4c4a6"></div>
<div class="abs" style="left:976.9px;top:559.8px;width:1.1px;height:42.9px;background:#b4c4a6"></div>
<div class="abs" style="left:1060.7px;top:559.8px;width:1.1px;height:42.9px;background:#b4c4a6"></div>
<div class="abs" style="left:1144.5px;top:559.8px;width:1.1px;height:42.9px;background:#b4c4a6"></div>
<div class="t" style="left:165.8px;top:577.5px;font-size:9.3px;letter-spacing:-0.14px;color:#e2efda;-webkit-text-stroke:.22px #e2efda;">R$ 0,00</div>
<div class="t" style="left:236.2px;top:577.5px;font-size:9.3px;letter-spacing:-0.02px;color:#e2efda;-webkit-text-stroke:.22px #e2efda;">-R$ 20.000,00</div>
<div class="t" style="left:333.4px;top:577.5px;font-size:9.3px;letter-spacing:-0.14px;color:#e2efda;-webkit-text-stroke:.22px #e2efda;">R$ 0,00</div>
<div class="t" style="left:417.2px;top:577.5px;font-size:9.3px;letter-spacing:-0.14px;color:#e2efda;-webkit-text-stroke:.22px #e2efda;">R$ 0,00</div>
<div class="t" style="left:501.0px;top:577.5px;font-size:9.3px;letter-spacing:-0.14px;color:#e2efda;-webkit-text-stroke:.22px #e2efda;">R$ 0,00</div>
<div class="t" style="left:584.8px;top:577.5px;font-size:9.3px;letter-spacing:-0.14px;color:#e2efda;-webkit-text-stroke:.22px #e2efda;">R$ 0,00</div>
<div class="t" style="left:668.6px;top:577.5px;font-size:9.3px;letter-spacing:-0.14px;color:#e2efda;-webkit-text-stroke:.22px #e2efda;">R$ 0,00</div>
<div class="t" style="left:737.9px;top:577.5px;font-size:9.3px;letter-spacing:-0.02px;color:#e2efda;-webkit-text-stroke:.22px #e2efda;">R$ 195.000,00</div>
<div class="t" style="left:836.2px;top:577.5px;font-size:9.3px;letter-spacing:-0.14px;color:#e2efda;-webkit-text-stroke:.22px #e2efda;">R$ 0,00</div>
<div class="t" style="left:905.5px;top:577.5px;font-size:9.3px;letter-spacing:-0.02px;color:#e2efda;-webkit-text-stroke:.22px #e2efda;">R$ 290.000,00</div>
<div class="t" style="left:1003.8px;top:577.5px;font-size:9.3px;letter-spacing:-0.14px;color:#e2efda;-webkit-text-stroke:.22px #e2efda;">R$ 0,00</div>
<div class="t" style="left:1087.6px;top:577.5px;font-size:9.3px;letter-spacing:-0.14px;color:#e2efda;-webkit-text-stroke:.22px #e2efda;">R$ 0,00</div>
<div class="t" style="left:1156.8px;top:577.5px;font-size:9.3px;letter-spacing:-0.02px;color:#e2efda;-webkit-text-stroke:.22px #e2efda;">R$ 465.000,00</div>
<div class="abs" style="left:50.7px;top:604.8px;width:87.1px;height:42.0px;background:#d9d9d9"></div>
<div class="t" style="left:62.8px;top:620.8px;font-size:10.9px;letter-spacing:0.02px;font-weight:700;color:#404040;">Rentabilidade</div>
<div class="abs" style="left:140.1px;top:603.6px;width:1004.9px;height:43.7px;background:#f2f2f2"></div>
<div class="abs" style="left:1145.0px;top:603.6px;width:83.5px;height:43.7px;background:#808080"></div>
<div class="abs" style="left:222.7px;top:603.6px;width:1.1px;height:43.7px;background:#d2d2d2"></div>
<div class="abs" style="left:306.5px;top:603.6px;width:1.1px;height:43.7px;background:#d2d2d2"></div>
<div class="abs" style="left:390.3px;top:603.6px;width:1.1px;height:43.7px;background:#d2d2d2"></div>
<div class="abs" style="left:474.1px;top:603.6px;width:1.1px;height:43.7px;background:#d2d2d2"></div>
<div class="abs" style="left:557.9px;top:603.6px;width:1.1px;height:43.7px;background:#d2d2d2"></div>
<div class="abs" style="left:641.7px;top:603.6px;width:1.1px;height:43.7px;background:#d2d2d2"></div>
<div class="abs" style="left:725.5px;top:603.6px;width:1.1px;height:43.7px;background:#d2d2d2"></div>
<div class="abs" style="left:809.3px;top:603.6px;width:1.1px;height:43.7px;background:#d2d2d2"></div>
<div class="abs" style="left:893.1px;top:603.6px;width:1.1px;height:43.7px;background:#d2d2d2"></div>
<div class="abs" style="left:976.9px;top:603.6px;width:1.1px;height:43.7px;background:#d2d2d2"></div>
<div class="abs" style="left:1060.7px;top:603.6px;width:1.1px;height:43.7px;background:#d2d2d2"></div>
<div class="abs" style="left:1144.5px;top:603.6px;width:1.1px;height:43.7px;background:#b9b9b9"></div>
<div class="abs" style="left:1227.7px;top:603.6px;width:0.8px;height:43.7px;background:#a9a9a9"></div>
<div class="abs" style="left:140.1px;top:646.8px;width:1004.9px;height:1.0px;background:#dcdcdc"></div>
<div class="abs" style="left:1145.0px;top:646.8px;width:83.5px;height:1.0px;background:#a6a6a6"></div>
<div class="t" style="left:175.3px;top:621.3px;font-size:9.3px;color:#303030;transform:scaleX(0.948);transform-origin:0 0;-webkit-text-stroke:.22px #303030;">0%</div>
<div class="t" style="left:257.5px;top:621.3px;font-size:9.3px;color:#303030;transform:scaleX(0.962);transform-origin:0 0;-webkit-text-stroke:.22px #303030;">-1%</div>
<div class="t" style="left:342.9px;top:621.3px;font-size:9.3px;color:#303030;transform:scaleX(0.948);transform-origin:0 0;-webkit-text-stroke:.22px #303030;">0%</div>
<div class="t" style="left:426.7px;top:621.3px;font-size:9.3px;color:#303030;transform:scaleX(0.948);transform-origin:0 0;-webkit-text-stroke:.22px #303030;">0%</div>
<div class="t" style="left:845.7px;top:621.3px;font-size:9.3px;color:#303030;transform:scaleX(0.948);transform-origin:0 0;-webkit-text-stroke:.22px #303030;">0%</div>
<div class="t" style="left:926.9px;top:621.3px;font-size:9.3px;color:#303030;transform:scaleX(0.968);transform-origin:0 0;-webkit-text-stroke:.22px #303030;">31%</div>
<div class="t" style="left:1013.3px;top:621.3px;font-size:9.3px;color:#303030;transform:scaleX(0.948);transform-origin:0 0;-webkit-text-stroke:.22px #303030;">0%</div>
<div class="t" style="left:1097.1px;top:621.3px;font-size:9.3px;color:#303030;transform:scaleX(0.948);transform-origin:0 0;-webkit-text-stroke:.22px #303030;">0%</div>
<div class="t" style="left:1180.8px;top:621.3px;font-size:9.3px;color:#e4e4e4;transform:scaleX(0.948);transform-origin:0 0;-webkit-text-stroke:.22px #e4e4e4;">2%</div>
<!-- g_bottom -->
<svg style="left:1586.0px;top:205.7px" width="8.4" height="6.2" viewBox="0 0 8.4 6.2" ><path d="M4.200 0L8.400 6.200H0z" fill="#6f6f6f"/></svg>
<div class="abs" style="left:1586.5px;top:217.0px;width:7.5px;height:395.5px;background:#767676;border-radius:4px"></div>
<svg style="left:1586.0px;top:697.5px" width="8.4" height="6.2" viewBox="0 0 8.4 6.2" ><path d="M0 0h8.400L4.200 6.200z" fill="#6f6f6f"/></svg>
<svg style="left:13.0px;top:715.0px" width="5" height="14" viewBox="0 0 5 14" fill="#3a3a3a"><circle cx="2.400" cy="3.300" r="1.100"/><circle cx="2.400" cy="6.600" r="1.100"/><circle cx="2.400" cy="9.900" r="1.100"/></svg>
<svg style="left:35.3px;top:717.2px" width="6.2" height="8" viewBox="0 0 6.2 8" ><path d="M6.200 0v8L0 4z" fill="#6f6f6f"/></svg>
<div class="abs" style="left:46.0px;top:716.8px;width:1268.0px;height:8.2px;background:#767676;border-radius:4px"></div>
<svg style="left:1571.0px;top:717.2px" width="6.2" height="8" viewBox="0 0 6.2 8" ><path d="M0 0v8L6.200 4z" fill="#6f6f6f"/></svg>
<div class="abs" style="left:0.0px;top:735.5px;width:1600.0px;height:1.0px;background:#dcdcdc"></div>
<div class="t" style="left:11.5px;top:741.5px;font-size:10.6px;color:#444;transform:scaleX(0.903);transform-origin:0 0;">Pronto</div>
<svg style="left:59.5px;top:740.5px" width="14" height="12.5" viewBox="0 0 14 12.5" ><rect x="0.600" y="0.600" width="12" height="10" fill="none" stroke="#555" stroke-width="1.100"/><path d="M0.600 3.300h12" stroke="#555" stroke-width="1"/><circle cx="9.500" cy="8.500" r="3.300" fill="#f3f3f3" stroke="#555" stroke-width="1.100"/><circle cx="9.500" cy="8.500" r="1.300" fill="#555"/></svg>
<svg style="left:89.0px;top:740.0px" width="13.5" height="13.5" viewBox="0 0 13.5 13.5" ><circle cx="6" cy="2" r="1.500" fill="none" stroke="#444" stroke-width="1"/><path d="M1 4.500c1.500 1 3 1.300 5 1.300s3.500-.3 5-1.300M4.300 6v3l-2.300 4M7.700 6v2.500" fill="none" stroke="#444" stroke-width="1.100" stroke-linecap="round"/><path d="M8 9l4.500 4M12.500 9l-4.500 4" stroke="#444" stroke-width="1.100"/></svg>
<div class="t" style="left:105.9px;top:741.6px;font-size:10.4px;font-weight:700;color:#333;transform:scaleX(0.903);transform-origin:0 0;">Acessibilidade: investigar</div>
<div class="abs" style="left:1317.5px;top:737.0px;width:36.5px;height:19.0px;background:#dcdcdc"></div>
<svg style="left:1329.0px;top:740.0px" width="13" height="12.5" viewBox="0 0 13 12.5" ><rect x="0.600" y="0.600" width="11.800" height="11.300" fill="none" stroke="#444" stroke-width="1.100"/><path d="M4.500 0.600v11.300M8.500 0.600v11.300M0.600 4.400h11.800M0.600 8.200h11.800" stroke="#444" stroke-width="1"/></svg>
<svg style="left:1366.0px;top:740.0px" width="13" height="12.5" viewBox="0 0 13 12.5" ><rect x="0.600" y="0.600" width="11.800" height="11.300" fill="none" stroke="#444" stroke-width="1.100"/><rect x="3" y="3" width="7" height="6.500" fill="none" stroke="#444" stroke-width="1"/><path d="M4.500 5h4M4.500 7h4" stroke="#444" stroke-width=".8"/></svg>
<svg style="left:1403.5px;top:740.0px" width="13" height="12.5" viewBox="0 0 13 12.5" ><path d="M0.600 0.600h11.800v11.300h-11.800zM4.300 0.600v5.800h4.600v-5.800" fill="none" stroke="#444" stroke-width="1.100"/></svg>
<div class="abs" style="left:1433.5px;top:745.6px;width:6.5px;height:1.0px;background:#555"></div>
<div class="abs" style="left:1445.0px;top:745.6px;width:93.5px;height:1.0px;background:#8a8a8a"></div>
<div class="abs" style="left:1491.7px;top:743.3px;width:1.0px;height:5.7px;background:#8a8a8a"></div>
<div class="abs" style="left:1486.0px;top:741.0px;width:3.2px;height:10.5px;background:#555"></div>
<div class="abs" style="left:1542.5px;top:745.6px;width:7.0px;height:1.0px;background:#555"></div>
<div class="abs" style="left:1545.5px;top:742.6px;width:1.0px;height:7.0px;background:#555"></div>
<div class="t" style="left:1562.0px;top:741.8px;font-size:10.2px;color:#444;transform:scaleX(0.883);transform-origin:0 0;">90%</div>
<div class="abs" style="left:0.0px;top:45.0px;width:1.0px;height:712.0px;background:#8c8c8c"></div>
<div class="abs" style="left:0.0px;top:756.0px;width:1600.0px;height:1.0px;background:#8c8c8c"></div>
<div class="abs" style="left:1599.0px;top:45.0px;width:1.0px;height:712.0px;background:#8f8f8f"></div>
<div class="abs" style="left:1.0px;top:45.0px;width:1598.0px;height:1.5px;background:#f9fcfa"></div>
</body>
</html>
